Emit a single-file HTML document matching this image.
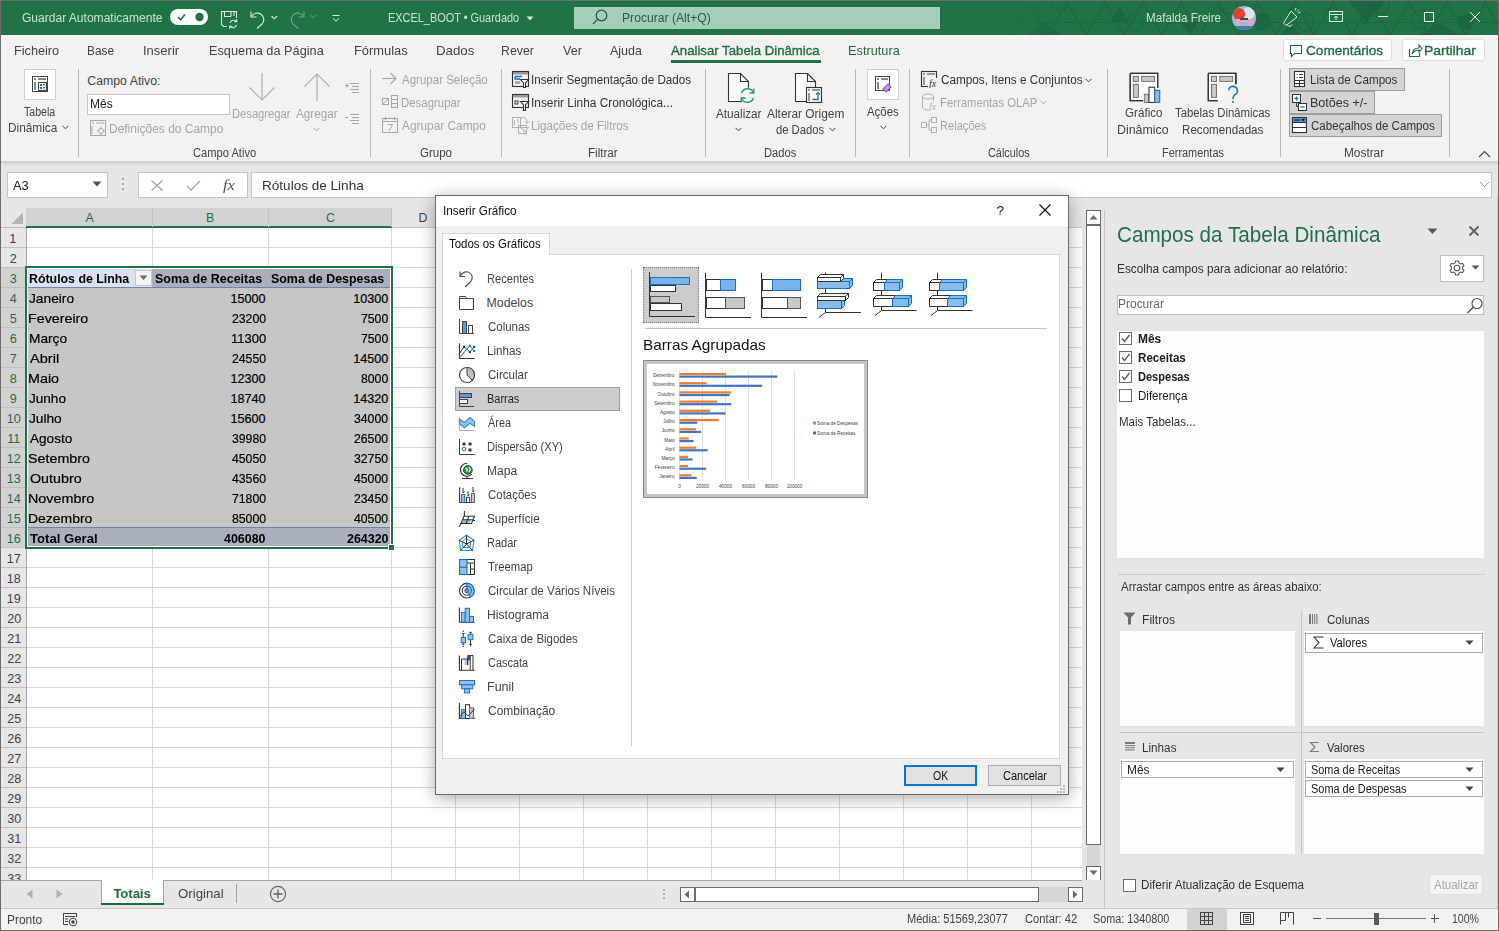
<!DOCTYPE html>
<html><head><meta charset="utf-8"><style>
html,body{margin:0;padding:0;}
body{width:1499px;height:931px;position:relative;overflow:hidden;background:#fff;font-family:'Liberation Sans',sans-serif;}
.a{position:absolute;}
.t{position:absolute;white-space:pre;line-height:1;transform-origin:0 0;}
</style></head><body>
<div class="a" style="left:0px;top:0px;width:1499px;height:931px;background:#e6e6e6;"></div>
<div class="a" style="left:0px;top:0px;width:1499px;height:35px;background:#217346;"></div>
<svg class="a" style="left:1000px;top:1px;" width="499" height="34" viewBox="0 0 499 34"><defs><linearGradient id="pg" x1="0" x2="1" y1="0" y2="0"><stop offset="0" stop-color="#fff" stop-opacity="0"/><stop offset="0.12" stop-color="#fff" stop-opacity="1"/></linearGradient><mask id="pm"><rect x="0" y="0" width="499" height="34" fill="url(#pg)"/></mask></defs><g mask="url(#pm)"><g fill="#1e6641"><path d="M110 21.5 L129 21.5 L119.5 5Z"/><path d="M281 34 L300 34 L290.5 21.5Z"/><path d="M348 0 L386 0 L367 21.5Z"/><path d="M180 21.5 L199 21.5 L190 34Z"/><path d="M420 34 L458 34 L439 21.5Z"/><path d="M44 21.5 L63 34 L25 34Z"/><circle cx="262" cy="21" r="9"/><circle cx="466" cy="21" r="8"/></g><g fill="none" stroke="#1b6740" stroke-width="1.1"><path d="M-66.0 34 L-46.4 0"/><path d="M-66.0 34 L-85.6 0"/><path d="M-28.0 34 L-8.4 0"/><path d="M-28.0 34 L-47.6 0"/><path d="M10.0 34 L29.6 0"/><path d="M10.0 34 L-9.6 0"/><path d="M48.0 34 L67.6 0"/><path d="M48.0 34 L28.4 0"/><path d="M86.0 34 L105.6 0"/><path d="M86.0 34 L66.4 0"/><path d="M124.0 34 L143.6 0"/><path d="M124.0 34 L104.4 0"/><path d="M162.0 34 L181.6 0"/><path d="M162.0 34 L142.4 0"/><path d="M200.0 34 L219.6 0"/><path d="M200.0 34 L180.4 0"/><path d="M238.0 34 L257.6 0"/><path d="M238.0 34 L218.4 0"/><path d="M276.0 34 L295.6 0"/><path d="M276.0 34 L256.4 0"/><path d="M314.0 34 L333.6 0"/><path d="M314.0 34 L294.4 0"/><path d="M352.0 34 L371.6 0"/><path d="M352.0 34 L332.4 0"/><path d="M390.0 34 L409.6 0"/><path d="M390.0 34 L370.4 0"/><path d="M428.0 34 L447.6 0"/><path d="M428.0 34 L408.4 0"/><path d="M466.0 34 L485.6 0"/><path d="M466.0 34 L446.4 0"/><path d="M504.0 34 L523.6 0"/><path d="M504.0 34 L484.4 0"/><path d="M542.0 34 L561.6 0"/><path d="M542.0 34 L522.4 0"/><path d="M580.0 34 L599.6 0"/><path d="M580.0 34 L560.4 0"/><path d="M0 21.5 H499"/><circle cx="60" cy="0" r="9"/><circle cx="135" cy="21" r="8"/><circle cx="228" cy="4" r="9"/><circle cx="305" cy="21" r="9"/><circle cx="380" cy="4" r="9"/><circle cx="420" cy="18" r="9"/></g></g></svg>
<div class="t" style="left:22.40px;top:12px;color:rgba(255,255,255,0.78);font-family:'Liberation Sans';font-size:12.5px;transform:scaleX(0.9630);">Guardar Automaticamente</div>
<div class="a" style="left:170px;top:9px;width:38px;height:16px;background:#ffffff;border-radius:8px;"></div>
<svg class="a" style="left:170px;top:9px;" width="38" height="16" viewBox="0 0 38 16"><path d="M8 8.2 L10.6 10.8 L15 5.6" fill="none" stroke="#217346" stroke-width="1.6"/><circle cx="29.5" cy="8" r="4.2" fill="#217346"/></svg>
<svg class="a" style="left:219px;top:9px;" width="20" height="20" viewBox="0 0 20 20"><g fill="none" stroke="#d9ebe0" stroke-width="1.1"><path d="M8 17.5 H4.5 L2.5 15.5 V2.5 H17.5 V9"/><path d="M5.5 2.5 V7.5 H12"/><path d="M12 2.5 V7.5 M15 2.5 V7"/>
<path d="M11 14 A3.8 3.8 0 0 1 17.5 12.5 M17.8 10 V12.8 H15"/><path d="M17.5 16 A3.8 3.8 0 0 1 11 17.5 M10.7 20 V17.2 H13.5"/></g></svg>
<svg class="a" style="left:248px;top:9px;" width="20" height="20" viewBox="0 0 20 20"><g fill="none" stroke="#d9ebe0" stroke-width="1.1"><path d="M3 2.5 V8 H8.5"/><path d="M3.5 7.5 A6.5 6.5 0 1 1 14 15 L9 19.5"/></g></svg>
<svg class="a" style="left:271px;top:15px;" width="7" height="6" viewBox="0 0 7 6"><path d="M0.5 1 L3.2 3.8 L6 1" fill="none" stroke="#d9ebe0" stroke-width="1.1"/></svg>
<svg class="a" style="left:288px;top:9px;" width="20" height="20" viewBox="0 0 20 20"><g fill="none" stroke="#6fa586" stroke-width="1.1"><path d="M16 2.5 V8 H10.5"/><path d="M15.5 7.5 A6.5 6.5 0 1 0 5 15 L10 19.5"/></g></svg>
<svg class="a" style="left:310px;top:14px;" width="7" height="6" viewBox="0 0 7 6"><path d="M0.5 1 L3.2 3.8 L6 1" fill="none" stroke="#6fa586" stroke-width="1"/></svg>
<svg class="a" style="left:331px;top:13px;" width="10" height="10" viewBox="0 0 10 10"><g fill="none" stroke="#d9ebe0" stroke-width="1"><path d="M1.5 2.5 H8.5"/><path d="M2 5.5 L5 8.2 L8 5.5"/></g></svg>
<div class="t" style="left:388.43px;top:12px;color:rgba(255,255,255,0.78);font-family:'Liberation Sans';font-size:12.5px;transform:scaleX(0.8738);">EXCEL_BOOT • Guardado</div>
<svg class="a" style="left:526px;top:16px;" width="8" height="5" viewBox="0 0 8 5"><path d="M0.5 0.5 H7.5 L4 4.5Z" fill="#d9ebe0"/></svg>
<div class="a" style="left:574px;top:7px;width:366px;height:22px;background:#a3cfb7;"></div>
<svg class="a" style="left:590px;top:8px;" width="20" height="20" viewBox="0 0 20 20"><g fill="none" stroke="#1f5c3b" stroke-width="1.2"><circle cx="11.5" cy="7.5" r="5.3"/><path d="M7.8 11.2 L3 16"/></g></svg>
<div class="t" style="left:622.33px;top:12px;color:#26603f;font-family:'Liberation Sans';font-size:12.5px;transform:scaleX(0.9711);">Procurar (Alt+Q)</div>
<div class="t" style="left:1145.57px;top:12px;color:rgba(255,255,255,0.78);font-family:'Liberation Sans';font-size:12.5px;transform:scaleX(0.9313);">Mafalda Freire</div>
<svg class="a" style="left:1232px;top:6px;" width="24" height="24" viewBox="0 0 24 24"><defs><clipPath id="av"><circle cx="12" cy="12" r="12"/></clipPath></defs><g clip-path="url(#av)">
<rect x="0" y="0" width="24" height="24" fill="#9fb9d6"/><circle cx="17" cy="7" r="6" fill="#dce9f2"/><circle cx="7" cy="8" r="6" fill="#e2402c"/><rect x="4" y="13" width="17" height="4" fill="#e9a9bd"/>
<rect x="5" y="16" width="2" height="6" fill="#e9a9bd"/><rect x="17" y="16" width="2" height="6" fill="#e9a9bd"/><rect x="8" y="12" width="8" height="2" fill="#3b4a6a"/><rect x="0" y="20" width="24" height="4" fill="#4d78b8"/></g></svg>
<svg class="a" style="left:1280px;top:6px;" width="22" height="22" viewBox="0 0 22 22"><g fill="none" stroke="#d9ebe0" stroke-width="1"><path d="M3.5 17 L6 19.5 L17 11 L11 5 Z"/><path d="M7 18 Q8 21.5 11 20 L12 18.5"/><path d="M15 4.5 L16 2 M18 7 L20.5 6 M17 5.5 L19 3.5"/></g></svg>
<svg class="a" style="left:1328px;top:10px;" width="17" height="14" viewBox="0 0 17 14"><g fill="none" stroke="#d9ebe0" stroke-width="1"><rect x="1.5" y="1.5" width="13" height="10"/><path d="M1.5 4.5 H14.5"/><path d="M8 10 V6 M6 8 L8 6 L10 8"/></g></svg>
<div class="a" style="left:1378px;top:16px;width:10px;height:1px;background:#e6f1ea;"></div>
<div class="a" style="left:1424px;top:12px;width:10px;height:10px;box-sizing:border-box;border:1px solid #e6f1ea;"></div>
<svg class="a" style="left:1469px;top:11px;" width="12" height="12" viewBox="0 0 12 12"><path d="M1 1 L11 11 M11 1 L1 11" stroke="#e6f1ea" stroke-width="1"/></svg>
<div class="a" style="left:0px;top:35px;width:1499px;height:126px;background:#f3f2f1;"></div>
<div class="t" style="left:14.26px;top:44px;color:#444444;font-family:'Liberation Sans';font-size:13.5px;transform:scaleX(0.9404);">Ficheiro</div>
<div class="t" style="left:87.32px;top:44px;color:#444444;font-family:'Liberation Sans';font-size:13.5px;transform:scaleX(0.8800);">Base</div>
<div class="t" style="left:143.04px;top:44px;color:#444444;font-family:'Liberation Sans';font-size:13.5px;transform:scaleX(0.9622);">Inserir</div>
<div class="t" style="left:209.46px;top:44px;color:#444444;font-family:'Liberation Sans';font-size:13.5px;transform:scaleX(0.9438);">Esquema da Página</div>
<div class="t" style="left:354.25px;top:44px;color:#444444;font-family:'Liberation Sans';font-size:13.5px;transform:scaleX(0.9527);">Fórmulas</div>
<div class="t" style="left:436.02px;top:44px;color:#444444;font-family:'Liberation Sans';font-size:13.5px;transform:scaleX(0.9842);">Dados</div>
<div class="t" style="left:501.49px;top:44px;color:#444444;font-family:'Liberation Sans';font-size:13.5px;transform:scaleX(0.9143);">Rever</div>
<div class="t" style="left:563.00px;top:44px;color:#444444;font-family:'Liberation Sans';font-size:13.5px;transform:scaleX(0.9300);">Ver</div>
<div class="t" style="left:610.00px;top:44px;color:#444444;font-family:'Liberation Sans';font-size:13.5px;transform:scaleX(0.9257);">Ajuda</div>
<div class="t" style="left:671.00px;top:44px;color:#1e6e42;font-family:'Liberation Sans';font-size:13.5px;transform:scaleX(0.9776);-webkit-text-stroke:0.35px currentColor;">Analisar Tabela Dinâmica</div>
<div class="t" style="left:848.46px;top:44px;color:#1e6e42;font-family:'Liberation Sans';font-size:13.5px;transform:scaleX(0.9444);">Estrutura</div>
<div class="a" style="left:671px;top:60px;width:150px;height:3px;background:#1e7145;"></div>
<div class="a" style="left:1283px;top:39px;width:109px;height:22px;background:#ffffff;box-sizing:border-box;border:1px solid #e1dfdd;border-radius:3px;"></div>
<svg class="a" style="left:1289px;top:44px;" width="14" height="14" viewBox="0 0 14 14"><path d="M1.5 1.5 H12.5 V9.5 H5.5 L2.5 12.5 V9.5 H1.5 Z" fill="none" stroke="#1e6e42" stroke-width="1.1"/></svg>
<div class="t" style="left:1306.00px;top:44px;color:#1e6e42;font-family:'Liberation Sans';font-size:13.5px;transform:scaleX(1.0079);-webkit-text-stroke:0.35px currentColor;">Comentários</div>
<div class="a" style="left:1402px;top:39px;width:83px;height:22px;background:#ffffff;box-sizing:border-box;border:1px solid #e1dfdd;border-radius:3px;"></div>
<svg class="a" style="left:1408px;top:43px;" width="15" height="15" viewBox="0 0 15 15"><g fill="none" stroke="#1e6e42" stroke-width="1.1"><path d="M1.5 6 V13.5 H11.5 V10"/><path d="M4 11 Q5 5 11 5 V2 L14 5.5 L11 9 V7 Q7 7 4 11Z"/></g></svg>
<div class="t" style="left:1424.47px;top:44px;color:#1e6e42;font-family:'Liberation Sans';font-size:13.5px;transform:scaleX(1.0306);-webkit-text-stroke:0.35px currentColor;">Partilhar</div>
<div class="a" style="left:78px;top:69px;width:1px;height:88px;background:#bab8b6;"></div>
<div class="a" style="left:370px;top:69px;width:1px;height:88px;background:#bab8b6;"></div>
<div class="a" style="left:501px;top:69px;width:1px;height:88px;background:#bab8b6;"></div>
<div class="a" style="left:705px;top:69px;width:1px;height:88px;background:#bab8b6;"></div>
<div class="a" style="left:855px;top:69px;width:1px;height:88px;background:#bab8b6;"></div>
<div class="a" style="left:909px;top:69px;width:1px;height:88px;background:#bab8b6;"></div>
<div class="a" style="left:1107px;top:69px;width:1px;height:88px;background:#bab8b6;"></div>
<div class="a" style="left:1280px;top:69px;width:1px;height:88px;background:#bab8b6;"></div>
<div class="a" style="left:1449px;top:69px;width:1px;height:88px;background:#bab8b6;"></div>
<div class="t" style="left:192.60px;top:147px;color:#444444;font-family:'Liberation Sans';font-size:12.3px;transform:scaleX(0.9057);">Campo Ativo</div>
<div class="t" style="left:419.60px;top:147px;color:#444444;font-family:'Liberation Sans';font-size:12.3px;transform:scaleX(0.9353);">Grupo</div>
<div class="t" style="left:587.55px;top:147px;color:#444444;font-family:'Liberation Sans';font-size:12.3px;transform:scaleX(0.9452);">Filtrar</div>
<div class="t" style="left:763.69px;top:147px;color:#444444;font-family:'Liberation Sans';font-size:12.3px;transform:scaleX(0.9086);">Dados</div>
<div class="t" style="left:987.80px;top:147px;color:#444444;font-family:'Liberation Sans';font-size:12.3px;transform:scaleX(0.8851);">Cálculos</div>
<div class="t" style="left:1161.81px;top:147px;color:#444444;font-family:'Liberation Sans';font-size:12.3px;transform:scaleX(0.8884);">Ferramentas</div>
<div class="t" style="left:1344.44px;top:147px;color:#444444;font-family:'Liberation Sans';font-size:12.3px;transform:scaleX(0.9634);">Mostrar</div>
<div class="a" style="left:0px;top:161px;width:1499px;height:5px;background:linear-gradient(#cbcbcb,#e6e6e6);"></div>
<div class="a" style="left:24px;top:69px;width:32px;height:31px;background:#ffffff;box-sizing:border-box;border:1px solid #d2d0ce;"></div>
<svg class="a" style="left:31px;top:75px;" width="18" height="18" viewBox="0 0 18 18"><g fill="none" stroke="#444" stroke-width="1"><rect x="1.5" y="1.5" width="15" height="15"/></g>
<rect x="3" y="3" width="2" height="2" fill="#888"/><rect x="7" y="3" width="8" height="2" fill="#888"/><rect x="3" y="7" width="2" height="8" fill="#888"/>
<rect x="7.5" y="7.5" width="8" height="8" fill="#fff" stroke="#444"/><rect x="9" y="9" width="2" height="2" fill="#1a73c8"/><rect x="9" y="12" width="2" height="2" fill="#1a73c8"/><rect x="12" y="9" width="2" height="1.4" fill="#1a73c8"/><rect x="12" y="12" width="2" height="1.4" fill="#1a73c8"/></svg>
<div class="t" style="left:23.70px;top:106px;color:#444444;font-family:'Liberation Sans';font-size:12.3px;transform:scaleX(0.8622);">Tabela</div>
<div class="t" style="left:8.34px;top:122px;color:#444444;font-family:'Liberation Sans';font-size:12.3px;transform:scaleX(0.9627);">Dinâmica</div>
<svg class="a" style="left:62px;top:125px;" width="7" height="5" viewBox="0 0 7 5"><path d="M0.5 0.8 L3.5 3.8 L6.5 0.8" fill="none" stroke="#444" stroke-width="1"/></svg>
<div class="t" style="left:87.30px;top:75px;color:#444444;font-family:'Liberation Sans';font-size:12.3px;">Campo Ativo:</div>
<div class="a" style="left:87px;top:94px;width:143px;height:21px;background:#ffffff;box-sizing:border-box;border:1px solid #c8c6c4;"></div>
<div class="t" style="left:89.52px;top:98px;color:#222222;font-family:'Liberation Sans';font-size:12.3px;transform:scaleX(0.9773);">Mês</div>
<svg class="a" style="left:89px;top:119px;" width="18" height="18" viewBox="0 0 18 18"><g fill="none" stroke="#a6a6a6" stroke-width="1"><rect x="1.5" y="1.5" width="15" height="15"/><path d="M3 4 H5 M7 4 H15 M3 7 V15"/><circle cx="12" cy="12" r="2.5"/><path d="M12 8 V9 M12 15 V16 M8 12 H9 M15 12 H16"/></g></svg>
<div class="t" style="left:108.73px;top:123px;color:#a6a6a6;font-family:'Liberation Sans';font-size:12.3px;transform:scaleX(0.9724);">Definições do Campo</div>
<svg class="a" style="left:248px;top:72px;" width="28" height="30" viewBox="0 0 28 30"><g fill="none" stroke="#b3b0ad" stroke-width="1.2"><path d="M14 1 V28"/><path d="M1.5 15.5 L14 28 L26.5 15.5"/></g></svg>
<div class="t" style="left:231.69px;top:108px;color:#a6a6a6;font-family:'Liberation Sans';font-size:12.3px;transform:scaleX(0.9094);">Desagregar</div>
<svg class="a" style="left:303px;top:72px;" width="28" height="30" viewBox="0 0 28 30"><g fill="none" stroke="#b3b0ad" stroke-width="1.2"><path d="M14 2 V29"/><path d="M1.5 14.5 L14 2 L26.5 14.5"/></g></svg>
<div class="t" style="left:296.20px;top:108px;color:#a6a6a6;font-family:'Liberation Sans';font-size:12.3px;transform:scaleX(0.9500);">Agregar</div>
<svg class="a" style="left:313px;top:127px;" width="7" height="5" viewBox="0 0 7 5"><path d="M0.5 0.8 L3.5 3.8 L6.5 0.8" fill="none" stroke="#a6a6a6" stroke-width="1"/></svg>
<svg class="a" style="left:344px;top:82px;" width="16" height="12" viewBox="0 0 16 12"><g stroke="#a6a6a6" stroke-width="1" fill="none"><path d="M1 3.5 H5 M3 1.5 V5.5"/><path d="M6 1.5 H15 M8 4.5 H15 M6 7.5 H15 M8 10.5 H15"/></g></svg>
<svg class="a" style="left:344px;top:113px;" width="16" height="12" viewBox="0 0 16 12"><g stroke="#a6a6a6" stroke-width="1" fill="none"><path d="M1 4.5 H4"/><path d="M6 1.5 H15 M8 4.5 H15 M6 7.5 H15 M8 10.5 H15"/></g></svg>
<svg class="a" style="left:381px;top:72px;" width="17" height="13" viewBox="0 0 17 13"><g fill="none" stroke="#a6a6a6" stroke-width="1.1"><path d="M1 6.5 H15"/><path d="M9.5 1 L15 6.5 L9.5 12"/></g></svg>
<div class="t" style="left:401.50px;top:74px;color:#a6a6a6;font-family:'Liberation Sans';font-size:12.3px;transform:scaleX(0.9363);">Agrupar Seleção</div>
<svg class="a" style="left:381px;top:94px;" width="18" height="15" viewBox="0 0 18 15"><g fill="none" stroke="#a6a6a6" stroke-width="1"><rect x="1.5" y="4.5" width="6" height="6"/><path d="M1.5 10.5 L7.5 4.5"/><rect x="10.5" y="1.5" width="6" height="12"/><path d="M10.5 5.5 H16.5 M10.5 9.5 H16.5"/></g></svg>
<div class="t" style="left:400.57px;top:97px;color:#a6a6a6;font-family:'Liberation Sans';font-size:12.3px;transform:scaleX(0.9281);">Desagrupar</div>
<svg class="a" style="left:381px;top:116px;" width="18" height="18" viewBox="0 0 18 18"><g fill="none" stroke="#a6a6a6" stroke-width="1"><rect x="1.5" y="2.5" width="15" height="14"/><path d="M1.5 5.5 H16.5 M4.5 1 V4 M13.5 1 V4"/><path d="M6.5 8.5 H11.5 L8 15"/></g></svg>
<div class="t" style="left:401.50px;top:120px;color:#a6a6a6;font-family:'Liberation Sans';font-size:12.3px;transform:scaleX(0.9655);">Agrupar Campo</div>
<svg class="a" style="left:511px;top:70px;" width="19" height="19" viewBox="0 0 19 19"><g fill="none" stroke="#333" stroke-width="1.1"><rect x="1.5" y="1.5" width="16" height="15"/></g><rect x="2" y="2" width="15" height="2.5" fill="#999"/>
<path d="M4 6.5 H11 M4 6.5 V9 H9" stroke="#1a73c8" stroke-width="1.3" fill="none"/><rect x="4" y="11" width="5" height="3" fill="#aaa"/>
<path d="M9.5 9.5 H17.5 L14.5 13 V17.5 H12.5 V13 Z" fill="#fff" stroke="#333" stroke-width="1.1"/></svg>
<div class="t" style="left:531.36px;top:74px;color:#333333;font-family:'Liberation Sans';font-size:12.3px;transform:scaleX(0.9435);">Inserir Segmentação de Dados</div>
<svg class="a" style="left:511px;top:93px;" width="19" height="19" viewBox="0 0 19 19"><g fill="none" stroke="#333" stroke-width="1.1"><rect x="1.5" y="1.5" width="16" height="13"/></g><rect x="2" y="2" width="15" height="2.5" fill="#999"/>
<rect x="4" y="8" width="3" height="3" fill="none" stroke="#333"/><path d="M9.5 8.5 H17.5 L14.5 12 V17.5 H12.5 V12 Z" fill="#fff" stroke="#333" stroke-width="1.1"/></svg>
<div class="t" style="left:531.33px;top:97px;color:#333333;font-family:'Liberation Sans';font-size:12.3px;transform:scaleX(0.9662);">Inserir Linha Cronológica...</div>
<svg class="a" style="left:511px;top:116px;" width="19" height="19" viewBox="0 0 19 19"><g fill="none" stroke="#b0b0b0" stroke-width="1"><rect x="1.5" y="1.5" width="8" height="10"/><path d="M3.5 4 V9 M6 4 H8 M6 6 H8"/><path d="M10 2 A4 4 0 0 1 16 6 L16 7 M14 5.5 L16 7.5 L18 5.5"/><rect x="7.5" y="9.5" width="8" height="8"/><path d="M9 11.5 H17.5 L15 14 V18 H13 V14 Z" fill="#f3f2f1"/></g></svg>
<div class="t" style="left:531.35px;top:120px;color:#a6a6a6;font-family:'Liberation Sans';font-size:12.3px;transform:scaleX(0.9451);">Ligações de Filtros</div>
<svg class="a" style="left:726px;top:72px;" width="32" height="32" viewBox="0 0 32 32"><path d="M2.5 1.5 H14.5 L22.5 9.5 V29.5 H2.5 Z" fill="#fafafa" stroke="#333" stroke-width="1.1"/><path d="M14.5 1.5 V9.5 H22.5" fill="none" stroke="#333" stroke-width="1.1"/>
<g fill="#f3f2f1"><circle cx="21.5" cy="23.5" r="8"/></g>
<g fill="none" stroke="#21a366" stroke-width="1.4"><path d="M15.5 21 A6.5 6.5 0 0 1 27.5 20.5"/><path d="M27.5 26 A6.5 6.5 0 0 1 15.5 26.5"/></g>
<path d="M27.8 16.5 V21 H23.5" fill="none" stroke="#21a366" stroke-width="1.4"/><path d="M15.2 30.5 V26 H19.5" fill="none" stroke="#21a366" stroke-width="1.4"/></svg>
<div class="t" style="left:716.00px;top:108px;color:#444444;font-family:'Liberation Sans';font-size:12.3px;transform:scaleX(0.9500);">Atualizar</div>
<svg class="a" style="left:735px;top:127px;" width="7" height="5" viewBox="0 0 7 5"><path d="M0.5 0.8 L3.5 3.8 L6.5 0.8" fill="none" stroke="#444" stroke-width="1"/></svg>
<svg class="a" style="left:793px;top:72px;" width="32" height="32" viewBox="0 0 32 32"><path d="M2.5 1.5 H14.5 L22.5 9.5 V29.5 H2.5 Z" fill="#fafafa" stroke="#333" stroke-width="1.1"/><path d="M14.5 1.5 V9.5 H22.5" fill="none" stroke="#333" stroke-width="1.1"/>
<rect x="13.5" y="15.5" width="15" height="15" fill="#fafafa" stroke="#333" stroke-width="1.1"/><rect x="15" y="17" width="2" height="2" fill="#999"/><rect x="19" y="17" width="8" height="2" fill="#999"/><rect x="15" y="21" width="2" height="8" fill="#999"/>
<path d="M19.5 27.5 H25 V21" fill="none" stroke="#1a73c8" stroke-width="1.3"/><path d="M23 22.5 L25 20.5 L27 22.5" fill="none" stroke="#1a73c8" stroke-width="1.2"/></svg>
<div class="t" style="left:767.20px;top:108px;color:#444444;font-family:'Liberation Sans';font-size:12.3px;transform:scaleX(0.9675);">Alterar Origem</div>
<div class="t" style="left:776.30px;top:124px;color:#444444;font-family:'Liberation Sans';font-size:12.3px;transform:scaleX(0.9132);">de Dados</div>
<svg class="a" style="left:829px;top:127px;" width="7" height="5" viewBox="0 0 7 5"><path d="M0.5 0.8 L3.5 3.8 L6.5 0.8" fill="none" stroke="#444" stroke-width="1"/></svg>
<div class="a" style="left:867px;top:69px;width:32px;height:31px;background:#ffffff;box-sizing:border-box;border:1px solid #d2d0ce;"></div>
<svg class="a" style="left:874px;top:75px;" width="18" height="18" viewBox="0 0 18 18"><rect x="1.5" y="1.5" width="14" height="14" fill="none" stroke="#444"/><rect x="3" y="3" width="2" height="2" fill="#888"/><rect x="7" y="3" width="7" height="2" fill="#888"/><rect x="3" y="7" width="2" height="7" fill="#888"/>
<path d="M9 14 L14 9 L17 12 L12 17 Z" fill="#c39fd8" stroke="#9b4fc9" stroke-width="1.1"/></svg>
<div class="t" style="left:867.30px;top:106px;color:#444444;font-family:'Liberation Sans';font-size:12.3px;transform:scaleX(0.9294);">Ações</div>
<svg class="a" style="left:880px;top:125px;" width="7" height="5" viewBox="0 0 7 5"><path d="M0.5 0.8 L3.5 3.8 L6.5 0.8" fill="none" stroke="#444" stroke-width="1"/></svg>
<svg class="a" style="left:920px;top:70px;" width="18" height="18" viewBox="0 0 18 18"><rect x="1.5" y="1.5" width="15" height="15" fill="none" stroke="#333" stroke-width="1.1"/><rect x="3" y="3" width="2" height="2" fill="#999"/><rect x="7" y="3" width="8" height="2" fill="#999"/><rect x="3" y="7" width="2" height="8" fill="#999"/>
<rect x="8" y="8" width="10" height="10" fill="#f3f2f1"/><text x="9" y="17" font-family="Liberation Serif" font-style="italic" font-size="10" fill="#333">fx</text></svg>
<div class="t" style="left:940.70px;top:74px;color:#333333;font-family:'Liberation Sans';font-size:12.3px;transform:scaleX(0.9547);">Campos, Itens e Conjuntos</div>
<svg class="a" style="left:1085px;top:78px;" width="7" height="5" viewBox="0 0 7 5"><path d="M0.5 0.8 L3.5 3.8 L6.5 0.8" fill="none" stroke="#444" stroke-width="1"/></svg>
<svg class="a" style="left:921px;top:93px;" width="18" height="18" viewBox="0 0 18 18"><g fill="none" stroke="#b0b0b0" stroke-width="1"><ellipse cx="7" cy="3.5" rx="5.5" ry="2.5"/><path d="M1.5 3.5 V14.5 A5.5 2.5 0 0 0 8 17"/><path d="M12.5 3.5 V8"/></g><text x="8" y="17" font-family="Liberation Serif" font-style="italic" font-size="10" fill="#b0b0b0">fx</text></svg>
<div class="t" style="left:939.78px;top:97px;color:#a6a6a6;font-family:'Liberation Sans';font-size:12.3px;transform:scaleX(0.9190);">Ferramentas OLAP</div>
<svg class="a" style="left:1040px;top:100px;" width="7" height="5" viewBox="0 0 7 5"><path d="M0.5 0.8 L3.5 3.8 L6.5 0.8" fill="none" stroke="#a6a6a6" stroke-width="1"/></svg>
<svg class="a" style="left:920px;top:116px;" width="18" height="18" viewBox="0 0 18 18"><g fill="none" stroke="#b0b0b0" stroke-width="1"><rect x="1.5" y="6.5" width="5" height="5"/><rect x="11.5" y="1.5" width="5" height="5"/><rect x="11.5" y="11.5" width="5" height="5"/><path d="M6.5 9 H9 V4 H11.5 M9 9 V14 H11.5"/></g></svg>
<div class="t" style="left:939.80px;top:120px;color:#a6a6a6;font-family:'Liberation Sans';font-size:12.3px;transform:scaleX(0.9040);">Relações</div>
<svg class="a" style="left:1120px;top:66px;" width="130" height="40" viewBox="0 0 130 40"><path d="M10.2 7.4 H37.7 V22 M10.2 7.4 V34.7 H23" fill="none" stroke="#333" stroke-width="1.2"/><rect x="10.8" y="8" width="26.3" height="26.1" fill="#fafafa"/><path d="M10.2 7.4 H37.7 V22 M10.2 7.4 V34.7 H23" fill="none" stroke="#333" stroke-width="1.2"/><rect x="13.4" y="10.4" width="4.999999999999998" height="5.0" fill="#c8c8c8" stroke="#6b6b6b" stroke-width="0.9"/><rect x="21.7" y="10.4" width="12.900000000000002" height="5.0" fill="#c8c8c8" stroke="#6b6b6b" stroke-width="0.9"/><rect x="13.4" y="18.4" width="4.999999999999998" height="13.0" fill="#c8c8c8" stroke="#6b6b6b" stroke-width="0.9"/><rect x="24.3" y="28.2" width="4.7" height="8.2" fill="#c8c8c8" stroke="#6b6b6b" stroke-width="0.9"/><rect x="29" y="21.2" width="5.7" height="15.2" fill="#fff" stroke="#222" stroke-width="1"/><rect x="34.7" y="24.3" width="5" height="12.1" fill="#86bdec" stroke="#1a6fc4" stroke-width="1.1"/><path d="M88.3 7.4 H115.8 V18.5 M88.3 7.4 V34.7 H97.6" fill="none" stroke="#333" stroke-width="1.2"/><rect x="88.89999999999999" y="8" width="26.3" height="26.1" fill="#fafafa"/><path d="M88.3 7.4 H115.8 V18.5 M88.3 7.4 V34.7 H97.6" fill="none" stroke="#333" stroke-width="1.2"/><rect x="91.5" y="10.4" width="4.999999999999998" height="5.0" fill="#c8c8c8" stroke="#6b6b6b" stroke-width="0.9"/><rect x="99.8" y="10.4" width="12.900000000000002" height="5.0" fill="#c8c8c8" stroke="#6b6b6b" stroke-width="0.9"/><rect x="91.5" y="18.4" width="4.999999999999998" height="13.0" fill="#c8c8c8" stroke="#6b6b6b" stroke-width="0.9"/><rect x="104" y="18" width="16" height="20" fill="#f3f2f1"/><path d="M108.8 24.5 A4.3 4.3 0 1 1 115 28.5 Q113 29.8 113 32.5 V33.3" fill="none" stroke="#1a80d0" stroke-width="1.6"/><circle cx="113" cy="36" r="1.1" fill="#1a80d0"/><path d="M115.8 7.4 V18.5" stroke="#333" stroke-width="1.2"/></svg>
<div class="t" style="left:1125.40px;top:107px;color:#444444;font-family:'Liberation Sans';font-size:12.3px;transform:scaleX(0.9487);">Gráfico</div>
<div class="t" style="left:1117.39px;top:124px;color:#444444;font-family:'Liberation Sans';font-size:12.3px;transform:scaleX(1.0060);">Dinâmico</div>
<div class="t" style="left:1174.70px;top:107px;color:#444444;font-family:'Liberation Sans';font-size:12.3px;transform:scaleX(0.9223);">Tabelas Dinâmicas</div>
<div class="t" style="left:1181.56px;top:124px;color:#444444;font-family:'Liberation Sans';font-size:12.3px;transform:scaleX(0.9447);">Recomendadas</div>
<div class="a" style="left:1289px;top:68px;width:116px;height:23px;background:#d4d4d4;box-sizing:border-box;border:1px solid #9e9e9e;"></div>
<div class="a" style="left:1289px;top:91px;width:86px;height:23px;background:#d4d4d4;box-sizing:border-box;border:1px solid #9e9e9e;"></div>
<div class="a" style="left:1289px;top:114px;width:153px;height:23px;background:#d4d4d4;box-sizing:border-box;border:1px solid #9e9e9e;"></div>
<svg class="a" style="left:1292px;top:70px;" width="15" height="18" viewBox="0 0 15 18"><rect x="2.5" y="1.5" width="10" height="15" fill="#fff" stroke="#333" stroke-width="1.1"/><path d="M4.5 4.5 H5.5 M7 4.5 H11 M4.5 7.5 H5.5 M7 7.5 H11 M2.5 10.5 H12.5 M2.5 13.5 H12.5 M7.5 10.5 V16.5" stroke="#333" stroke-width="1"/></svg>
<div class="t" style="left:1310.45px;top:74px;color:#333333;font-family:'Liberation Sans';font-size:12.3px;transform:scaleX(0.9473);">Lista de Campos</div>
<svg class="a" style="left:1291px;top:93px;" width="18" height="19" viewBox="0 0 18 19"><rect x="1.5" y="1.5" width="8" height="8" fill="#fff" stroke="#333"/><path d="M3.5 5.5 H7.5 M5.5 3.5 V7.5" stroke="#1a73c8" stroke-width="1.3"/>
<rect x="7.5" y="10.5" width="8" height="7" fill="#fff" stroke="#333"/><path d="M9.5 14 H13.5" stroke="#1a73c8" stroke-width="1.3"/><path d="M5.5 9.5 V13.5 H7.5" stroke="#333" fill="none"/></svg>
<div class="t" style="left:1310.38px;top:97px;color:#333333;font-family:'Liberation Sans';font-size:12.3px;transform:scaleX(1.0182);">Botões +/-</div>
<svg class="a" style="left:1291px;top:116px;" width="17" height="18" viewBox="0 0 17 18"><rect x="1.5" y="1.5" width="14" height="15" fill="#fff" stroke="#333" stroke-width="1.1"/><rect x="2" y="2" width="13" height="4" fill="#4a90d9"/><path d="M3.5 4 H9" stroke="#111" stroke-width="1"/><path d="M10 3 H14 L12 5.5Z" fill="#111"/><path d="M1.5 6.5 H15.5 M1.5 11.5 H15.5" stroke="#333"/></svg>
<div class="t" style="left:1311.40px;top:120px;color:#333333;font-family:'Liberation Sans';font-size:12.3px;transform:scaleX(0.9427);">Cabeçalhos de Campos</div>
<svg class="a" style="left:1478px;top:150px;" width="13" height="8" viewBox="0 0 13 8"><path d="M1 7 L6.5 1.5 L12 7" fill="none" stroke="#444" stroke-width="1.1"/></svg>
<div class="a" style="left:7px;top:172px;width:101px;height:26px;background:#ffffff;box-sizing:border-box;border:1px solid #c6c6c6;"></div>
<div class="t" style="left:13.00px;top:179px;color:#222222;font-family:'Liberation Sans';font-size:13.3px;transform:scaleX(0.9625);">A3</div>
<svg class="a" style="left:92px;top:181px;" width="10" height="6" viewBox="0 0 10 6"><path d="M0.5 0.5 H9.5 L5 5.5Z" fill="#555"/></svg>
<div class="a" style="left:122px;top:178px;width:2px;height:2px;background:#a0a0a0;"></div>
<div class="a" style="left:122px;top:183px;width:2px;height:2px;background:#a0a0a0;"></div>
<div class="a" style="left:122px;top:188px;width:2px;height:2px;background:#a0a0a0;"></div>
<div class="a" style="left:138px;top:172px;width:110px;height:26px;background:#ffffff;box-sizing:border-box;border:1px solid #c6c6c6;"></div>
<svg class="a" style="left:150px;top:179px;" width="14" height="13" viewBox="0 0 14 13"><path d="M1.5 1.5 L12.5 11.5 M12.5 1.5 L1.5 11.5" stroke="#a6a6a6" stroke-width="1.3"/></svg>
<svg class="a" style="left:186px;top:179px;" width="15" height="13" viewBox="0 0 15 13"><path d="M1 7 L5 11 L14 2" fill="none" stroke="#b0b0b0" stroke-width="1.6"/></svg>
<div class="t" style="left:223.20px;top:179px;color:#555555;font-family:'Liberation Serif';font-size:14px;font-style:italic;transform:scaleX(1.1800);">fx</div>
<div class="a" style="left:251px;top:172px;width:1241px;height:26px;background:#ffffff;box-sizing:border-box;border:1px solid #c6c6c6;"></div>
<div class="t" style="left:262.28px;top:179px;color:#333333;font-family:'Liberation Sans';font-size:13.3px;transform:scaleX(1.0192);">Rótulos de Linha</div>
<svg class="a" style="left:1479px;top:181px;" width="11" height="7" viewBox="0 0 11 7"><path d="M1 1 L5.5 5.5 L10 1" fill="none" stroke="#a0a0a0" stroke-width="1"/></svg>
<div class="a" style="left:27px;top:228px;width:1055px;height:652px;background:#ffffff;"></div>
<div class="a" style="left:1px;top:208px;width:1081px;height:19px;background:#e6e6e6;"></div>
<div class="a" style="left:26px;top:208px;width:365px;height:18px;background:#d2d2d2;"></div>
<div class="a" style="left:26px;top:226px;width:366px;height:2px;background:#217346;"></div>
<div class="a" style="left:1px;top:227px;width:25px;height:1px;background:#b8b8b8;"></div>
<div class="a" style="left:392px;top:227px;width:690px;height:1px;background:#c6c6c6;"></div>
<div class="a" style="left:152px;top:208px;width:1px;height:19px;background:#c0c0c0;"></div>
<div class="a" style="left:268px;top:208px;width:1px;height:19px;background:#c0c0c0;"></div>
<div class="a" style="left:391px;top:208px;width:1px;height:19px;background:#c0c0c0;"></div>
<div class="a" style="left:455px;top:208px;width:1px;height:19px;background:#c0c0c0;"></div>
<div class="a" style="left:519px;top:208px;width:1px;height:19px;background:#c0c0c0;"></div>
<div class="a" style="left:583px;top:208px;width:1px;height:19px;background:#c0c0c0;"></div>
<div class="a" style="left:647px;top:208px;width:1px;height:19px;background:#c0c0c0;"></div>
<div class="a" style="left:711px;top:208px;width:1px;height:19px;background:#c0c0c0;"></div>
<div class="a" style="left:775px;top:208px;width:1px;height:19px;background:#c0c0c0;"></div>
<div class="a" style="left:839px;top:208px;width:1px;height:19px;background:#c0c0c0;"></div>
<div class="a" style="left:903px;top:208px;width:1px;height:19px;background:#c0c0c0;"></div>
<div class="a" style="left:967px;top:208px;width:1px;height:19px;background:#c0c0c0;"></div>
<div class="a" style="left:1031px;top:208px;width:1px;height:19px;background:#c0c0c0;"></div>
<svg class="a" style="left:11px;top:212px;" width="13" height="13" viewBox="0 0 13 13"><path d="M12 0.5 V12 H0.5 Z" fill="#b4b4b4"/></svg>
<div class="t" style="left:85.50px;top:212px;color:#1e6e42;font-family:'Liberation Sans';font-size:12.3px;">A</div>
<div class="t" style="left:206.00px;top:212px;color:#1e6e42;font-family:'Liberation Sans';font-size:12.3px;">B</div>
<div class="t" style="left:326.00px;top:212px;color:#1e6e42;font-family:'Liberation Sans';font-size:12.3px;">C</div>
<div class="t" style="left:418.50px;top:212px;color:#444444;font-family:'Liberation Sans';font-size:12.3px;">D</div>
<div class="t" style="left:483.00px;top:212px;color:#444444;font-family:'Liberation Sans';font-size:12.3px;">E</div>
<div class="t" style="left:547.50px;top:212px;color:#444444;font-family:'Liberation Sans';font-size:12.3px;">F</div>
<div class="t" style="left:611.00px;top:212px;color:#444444;font-family:'Liberation Sans';font-size:12.3px;">G</div>
<div class="t" style="left:675.00px;top:212px;color:#444444;font-family:'Liberation Sans';font-size:12.3px;">H</div>
<div class="t" style="left:741.50px;top:212px;color:#444444;font-family:'Liberation Sans';font-size:12.3px;">I</div>
<div class="t" style="left:804.50px;top:212px;color:#444444;font-family:'Liberation Sans';font-size:12.3px;">J</div>
<div class="t" style="left:867.00px;top:212px;color:#444444;font-family:'Liberation Sans';font-size:12.3px;">K</div>
<div class="t" style="left:931.50px;top:212px;color:#444444;font-family:'Liberation Sans';font-size:12.3px;">L</div>
<div class="t" style="left:994.00px;top:212px;color:#444444;font-family:'Liberation Sans';font-size:12.3px;">M</div>
<div class="t" style="left:1052.50px;top:212px;color:#444444;font-family:'Liberation Sans';font-size:12.3px;">N</div>
<div class="a" style="left:27px;top:247px;width:1055px;height:1px;background:#d9d9d9;"></div>
<div class="a" style="left:27px;top:267px;width:1055px;height:1px;background:#d9d9d9;"></div>
<div class="a" style="left:27px;top:287px;width:1055px;height:1px;background:#d9d9d9;"></div>
<div class="a" style="left:27px;top:307px;width:1055px;height:1px;background:#d9d9d9;"></div>
<div class="a" style="left:27px;top:327px;width:1055px;height:1px;background:#d9d9d9;"></div>
<div class="a" style="left:27px;top:347px;width:1055px;height:1px;background:#d9d9d9;"></div>
<div class="a" style="left:27px;top:367px;width:1055px;height:1px;background:#d9d9d9;"></div>
<div class="a" style="left:27px;top:387px;width:1055px;height:1px;background:#d9d9d9;"></div>
<div class="a" style="left:27px;top:407px;width:1055px;height:1px;background:#d9d9d9;"></div>
<div class="a" style="left:27px;top:427px;width:1055px;height:1px;background:#d9d9d9;"></div>
<div class="a" style="left:27px;top:447px;width:1055px;height:1px;background:#d9d9d9;"></div>
<div class="a" style="left:27px;top:467px;width:1055px;height:1px;background:#d9d9d9;"></div>
<div class="a" style="left:27px;top:487px;width:1055px;height:1px;background:#d9d9d9;"></div>
<div class="a" style="left:27px;top:507px;width:1055px;height:1px;background:#d9d9d9;"></div>
<div class="a" style="left:27px;top:527px;width:1055px;height:1px;background:#d9d9d9;"></div>
<div class="a" style="left:27px;top:547px;width:1055px;height:1px;background:#d9d9d9;"></div>
<div class="a" style="left:27px;top:567px;width:1055px;height:1px;background:#d9d9d9;"></div>
<div class="a" style="left:27px;top:587px;width:1055px;height:1px;background:#d9d9d9;"></div>
<div class="a" style="left:27px;top:607px;width:1055px;height:1px;background:#d9d9d9;"></div>
<div class="a" style="left:27px;top:627px;width:1055px;height:1px;background:#d9d9d9;"></div>
<div class="a" style="left:27px;top:647px;width:1055px;height:1px;background:#d9d9d9;"></div>
<div class="a" style="left:27px;top:667px;width:1055px;height:1px;background:#d9d9d9;"></div>
<div class="a" style="left:27px;top:687px;width:1055px;height:1px;background:#d9d9d9;"></div>
<div class="a" style="left:27px;top:707px;width:1055px;height:1px;background:#d9d9d9;"></div>
<div class="a" style="left:27px;top:727px;width:1055px;height:1px;background:#d9d9d9;"></div>
<div class="a" style="left:27px;top:747px;width:1055px;height:1px;background:#d9d9d9;"></div>
<div class="a" style="left:27px;top:767px;width:1055px;height:1px;background:#d9d9d9;"></div>
<div class="a" style="left:27px;top:787px;width:1055px;height:1px;background:#d9d9d9;"></div>
<div class="a" style="left:27px;top:807px;width:1055px;height:1px;background:#d9d9d9;"></div>
<div class="a" style="left:27px;top:827px;width:1055px;height:1px;background:#d9d9d9;"></div>
<div class="a" style="left:27px;top:847px;width:1055px;height:1px;background:#d9d9d9;"></div>
<div class="a" style="left:27px;top:867px;width:1055px;height:1px;background:#d9d9d9;"></div>
<div class="a" style="left:152px;top:228px;width:1px;height:652px;background:#d9d9d9;"></div>
<div class="a" style="left:268px;top:228px;width:1px;height:652px;background:#d9d9d9;"></div>
<div class="a" style="left:391px;top:228px;width:1px;height:652px;background:#d9d9d9;"></div>
<div class="a" style="left:455px;top:228px;width:1px;height:652px;background:#d9d9d9;"></div>
<div class="a" style="left:519px;top:228px;width:1px;height:652px;background:#d9d9d9;"></div>
<div class="a" style="left:583px;top:228px;width:1px;height:652px;background:#d9d9d9;"></div>
<div class="a" style="left:647px;top:228px;width:1px;height:652px;background:#d9d9d9;"></div>
<div class="a" style="left:711px;top:228px;width:1px;height:652px;background:#d9d9d9;"></div>
<div class="a" style="left:775px;top:228px;width:1px;height:652px;background:#d9d9d9;"></div>
<div class="a" style="left:839px;top:228px;width:1px;height:652px;background:#d9d9d9;"></div>
<div class="a" style="left:903px;top:228px;width:1px;height:652px;background:#d9d9d9;"></div>
<div class="a" style="left:967px;top:228px;width:1px;height:652px;background:#d9d9d9;"></div>
<div class="a" style="left:1031px;top:228px;width:1px;height:652px;background:#d9d9d9;"></div>
<div class="a" style="left:1082px;top:208px;width:1px;height:672px;background:#c6c6c6;"></div>
<div class="a" style="left:1px;top:228px;width:25px;height:652px;background:#e6e6e6;"></div>
<div class="a" style="left:1px;top:268px;width:25px;height:279px;background:#d2d2d2;"></div>
<div class="a" style="left:26px;top:228px;width:1px;height:652px;background:#a8a8a8;"></div>
<div class="a" style="left:1px;top:247px;width:25px;height:1px;background:#c0c0c0;"></div>
<div class="t" style="left:9.30px;top:233px;color:#444444;font-family:'Liberation Sans';font-size:12.6px;">1</div>
<div class="a" style="left:1px;top:267px;width:25px;height:1px;background:#c0c0c0;"></div>
<div class="t" style="left:9.80px;top:253px;color:#444444;font-family:'Liberation Sans';font-size:12.6px;">2</div>
<div class="a" style="left:1px;top:287px;width:25px;height:1px;background:#c0c0c0;"></div>
<div class="t" style="left:9.80px;top:273px;color:#1e6e42;font-family:'Liberation Sans';font-size:12.6px;">3</div>
<div class="a" style="left:1px;top:307px;width:25px;height:1px;background:#c0c0c0;"></div>
<div class="t" style="left:9.80px;top:293px;color:#1e6e42;font-family:'Liberation Sans';font-size:12.6px;">4</div>
<div class="a" style="left:1px;top:327px;width:25px;height:1px;background:#c0c0c0;"></div>
<div class="t" style="left:9.80px;top:313px;color:#1e6e42;font-family:'Liberation Sans';font-size:12.6px;">5</div>
<div class="a" style="left:1px;top:347px;width:25px;height:1px;background:#c0c0c0;"></div>
<div class="t" style="left:9.80px;top:333px;color:#1e6e42;font-family:'Liberation Sans';font-size:12.6px;">6</div>
<div class="a" style="left:1px;top:367px;width:25px;height:1px;background:#c0c0c0;"></div>
<div class="t" style="left:9.80px;top:353px;color:#1e6e42;font-family:'Liberation Sans';font-size:12.6px;">7</div>
<div class="a" style="left:1px;top:387px;width:25px;height:1px;background:#c0c0c0;"></div>
<div class="t" style="left:9.80px;top:373px;color:#1e6e42;font-family:'Liberation Sans';font-size:12.6px;">8</div>
<div class="a" style="left:1px;top:407px;width:25px;height:1px;background:#c0c0c0;"></div>
<div class="t" style="left:9.80px;top:393px;color:#1e6e42;font-family:'Liberation Sans';font-size:12.6px;">9</div>
<div class="a" style="left:1px;top:427px;width:25px;height:1px;background:#c0c0c0;"></div>
<div class="t" style="left:6.80px;top:413px;color:#1e6e42;font-family:'Liberation Sans';font-size:12.6px;">10</div>
<div class="a" style="left:1px;top:447px;width:25px;height:1px;background:#c0c0c0;"></div>
<div class="t" style="left:7.30px;top:433px;color:#1e6e42;font-family:'Liberation Sans';font-size:12.6px;">11</div>
<div class="a" style="left:1px;top:467px;width:25px;height:1px;background:#c0c0c0;"></div>
<div class="t" style="left:6.80px;top:453px;color:#1e6e42;font-family:'Liberation Sans';font-size:12.6px;">12</div>
<div class="a" style="left:1px;top:487px;width:25px;height:1px;background:#c0c0c0;"></div>
<div class="t" style="left:6.80px;top:473px;color:#1e6e42;font-family:'Liberation Sans';font-size:12.6px;">13</div>
<div class="a" style="left:1px;top:507px;width:25px;height:1px;background:#c0c0c0;"></div>
<div class="t" style="left:6.80px;top:493px;color:#1e6e42;font-family:'Liberation Sans';font-size:12.6px;">14</div>
<div class="a" style="left:1px;top:527px;width:25px;height:1px;background:#c0c0c0;"></div>
<div class="t" style="left:6.80px;top:513px;color:#1e6e42;font-family:'Liberation Sans';font-size:12.6px;">15</div>
<div class="a" style="left:1px;top:547px;width:25px;height:1px;background:#c0c0c0;"></div>
<div class="t" style="left:6.80px;top:533px;color:#1e6e42;font-family:'Liberation Sans';font-size:12.6px;">16</div>
<div class="a" style="left:1px;top:567px;width:25px;height:1px;background:#c0c0c0;"></div>
<div class="t" style="left:6.80px;top:553px;color:#444444;font-family:'Liberation Sans';font-size:12.6px;">17</div>
<div class="a" style="left:1px;top:587px;width:25px;height:1px;background:#c0c0c0;"></div>
<div class="t" style="left:6.80px;top:573px;color:#444444;font-family:'Liberation Sans';font-size:12.6px;">18</div>
<div class="a" style="left:1px;top:607px;width:25px;height:1px;background:#c0c0c0;"></div>
<div class="t" style="left:6.80px;top:593px;color:#444444;font-family:'Liberation Sans';font-size:12.6px;">19</div>
<div class="a" style="left:1px;top:627px;width:25px;height:1px;background:#c0c0c0;"></div>
<div class="t" style="left:7.30px;top:613px;color:#444444;font-family:'Liberation Sans';font-size:12.6px;">20</div>
<div class="a" style="left:1px;top:647px;width:25px;height:1px;background:#c0c0c0;"></div>
<div class="t" style="left:7.30px;top:633px;color:#444444;font-family:'Liberation Sans';font-size:12.6px;">21</div>
<div class="a" style="left:1px;top:667px;width:25px;height:1px;background:#c0c0c0;"></div>
<div class="t" style="left:7.30px;top:653px;color:#444444;font-family:'Liberation Sans';font-size:12.6px;">22</div>
<div class="a" style="left:1px;top:687px;width:25px;height:1px;background:#c0c0c0;"></div>
<div class="t" style="left:7.30px;top:673px;color:#444444;font-family:'Liberation Sans';font-size:12.6px;">23</div>
<div class="a" style="left:1px;top:707px;width:25px;height:1px;background:#c0c0c0;"></div>
<div class="t" style="left:7.30px;top:693px;color:#444444;font-family:'Liberation Sans';font-size:12.6px;">24</div>
<div class="a" style="left:1px;top:727px;width:25px;height:1px;background:#c0c0c0;"></div>
<div class="t" style="left:7.30px;top:713px;color:#444444;font-family:'Liberation Sans';font-size:12.6px;">25</div>
<div class="a" style="left:1px;top:747px;width:25px;height:1px;background:#c0c0c0;"></div>
<div class="t" style="left:7.30px;top:733px;color:#444444;font-family:'Liberation Sans';font-size:12.6px;">26</div>
<div class="a" style="left:1px;top:767px;width:25px;height:1px;background:#c0c0c0;"></div>
<div class="t" style="left:7.30px;top:753px;color:#444444;font-family:'Liberation Sans';font-size:12.6px;">27</div>
<div class="a" style="left:1px;top:787px;width:25px;height:1px;background:#c0c0c0;"></div>
<div class="t" style="left:7.30px;top:773px;color:#444444;font-family:'Liberation Sans';font-size:12.6px;">28</div>
<div class="a" style="left:1px;top:807px;width:25px;height:1px;background:#c0c0c0;"></div>
<div class="t" style="left:7.30px;top:793px;color:#444444;font-family:'Liberation Sans';font-size:12.6px;">29</div>
<div class="a" style="left:1px;top:827px;width:25px;height:1px;background:#c0c0c0;"></div>
<div class="t" style="left:7.30px;top:813px;color:#444444;font-family:'Liberation Sans';font-size:12.6px;">30</div>
<div class="a" style="left:1px;top:847px;width:25px;height:1px;background:#c0c0c0;"></div>
<div class="t" style="left:7.30px;top:833px;color:#444444;font-family:'Liberation Sans';font-size:12.6px;">31</div>
<div class="a" style="left:1px;top:867px;width:25px;height:1px;background:#c0c0c0;"></div>
<div class="t" style="left:7.30px;top:853px;color:#444444;font-family:'Liberation Sans';font-size:12.6px;">32</div>
<div class="t" style="left:7.30px;top:873px;color:#444444;font-family:'Liberation Sans';font-size:12.6px;">33</div>
<div class="a" style="left:27px;top:268px;width:364px;height:20px;background:#a9afbd;"></div>
<div class="a" style="left:27px;top:268px;width:125px;height:20px;background:#d9e1f2;"></div>
<div class="a" style="left:27px;top:287px;width:364px;height:1px;background:#6f84ab;"></div>
<div class="a" style="left:27px;top:288px;width:364px;height:240px;background:#c6c6c6;"></div>
<div class="a" style="left:27px;top:528px;width:364px;height:19px;background:#a9afbd;"></div>
<div class="a" style="left:27px;top:527px;width:364px;height:1px;background:#6f84ab;"></div>
<div class="a" style="left:25px;top:266px;width:368px;height:283px;box-sizing:border-box;border:2px solid #217346;"></div>
<div class="a" style="left:27px;top:268px;width:364px;height:279px;box-sizing:border-box;border:1px solid #ffffff;"></div>
<div class="a" style="left:388px;top:544px;width:7px;height:7px;background:#217346;box-sizing:border-box;border:1px solid #ffffff;"></div>
<div class="a" style="left:135px;top:270px;width:17px;height:16px;background:#f4f4f4;box-sizing:border-box;border:1px solid #c8c8c8;"></div>
<svg class="a" style="left:139px;top:275px;" width="9" height="6" viewBox="0 0 9 6"><path d="M0.5 0.5 H8.5 L4.5 5Z" fill="#6b6b6b"/></svg>
<div class="t" style="left:28.92px;top:273px;color:#000000;font-family:'Liberation Sans';font-size:12.6px;font-weight:bold;transform:scaleX(0.9814);">Rótulos de Linha</div>
<div class="t" style="left:155.00px;top:273px;color:#000000;font-family:'Liberation Sans';font-size:12.6px;font-weight:bold;transform:scaleX(0.9944);">Soma de Receitas</div>
<div class="t" style="left:271.00px;top:273px;color:#000000;font-family:'Liberation Sans';font-size:12.6px;font-weight:bold;transform:scaleX(0.9861);">Soma de Despesas</div>
<div class="t" style="left:28.90px;top:293px;color:#000000;font-family:'Liberation Sans';font-size:12.6px;transform:scaleX(1.0902);-webkit-text-stroke:0.2px currentColor;">Janeiro</div>
<div class="t" style="left:230.60px;top:293px;color:#000000;font-family:'Liberation Sans';font-size:12.6px;-webkit-text-stroke:0.2px currentColor;">15000</div>
<div class="t" style="left:353.30px;top:293px;color:#000000;font-family:'Liberation Sans';font-size:12.6px;-webkit-text-stroke:0.2px currentColor;">10300</div>
<div class="t" style="left:28.47px;top:313px;color:#000000;font-family:'Liberation Sans';font-size:12.6px;transform:scaleX(1.1327);-webkit-text-stroke:0.2px currentColor;">Fevereiro</div>
<div class="t" style="left:231.60px;top:313px;color:#000000;font-family:'Liberation Sans';font-size:12.6px;transform:scaleX(0.9714);-webkit-text-stroke:0.2px currentColor;">23200</div>
<div class="t" style="left:361.14px;top:313px;color:#000000;font-family:'Liberation Sans';font-size:12.6px;transform:scaleX(0.9700);-webkit-text-stroke:0.2px currentColor;">7500</div>
<div class="t" style="left:28.51px;top:333px;color:#000000;font-family:'Liberation Sans';font-size:12.6px;transform:scaleX(1.0882);-webkit-text-stroke:0.2px currentColor;">Março</div>
<div class="t" style="left:230.57px;top:333px;color:#000000;font-family:'Liberation Sans';font-size:12.6px;transform:scaleX(1.0303);-webkit-text-stroke:0.2px currentColor;">11300</div>
<div class="t" style="left:361.14px;top:333px;color:#000000;font-family:'Liberation Sans';font-size:12.6px;transform:scaleX(0.9700);-webkit-text-stroke:0.2px currentColor;">7500</div>
<div class="t" style="left:29.60px;top:353px;color:#000000;font-family:'Liberation Sans';font-size:12.6px;transform:scaleX(1.1560);-webkit-text-stroke:0.2px currentColor;">Abril</div>
<div class="t" style="left:231.60px;top:353px;color:#000000;font-family:'Liberation Sans';font-size:12.6px;transform:scaleX(0.9714);-webkit-text-stroke:0.2px currentColor;">24550</div>
<div class="t" style="left:353.30px;top:353px;color:#000000;font-family:'Liberation Sans';font-size:12.6px;-webkit-text-stroke:0.2px currentColor;">14500</div>
<div class="t" style="left:28.46px;top:373px;color:#000000;font-family:'Liberation Sans';font-size:12.6px;transform:scaleX(1.1385);-webkit-text-stroke:0.2px currentColor;">Maio</div>
<div class="t" style="left:230.60px;top:373px;color:#000000;font-family:'Liberation Sans';font-size:12.6px;-webkit-text-stroke:0.2px currentColor;">12300</div>
<div class="t" style="left:361.14px;top:373px;color:#000000;font-family:'Liberation Sans';font-size:12.6px;transform:scaleX(0.9700);-webkit-text-stroke:0.2px currentColor;">8000</div>
<div class="t" style="left:28.90px;top:393px;color:#000000;font-family:'Liberation Sans';font-size:12.6px;transform:scaleX(1.0765);-webkit-text-stroke:0.2px currentColor;">Junho</div>
<div class="t" style="left:230.60px;top:393px;color:#000000;font-family:'Liberation Sans';font-size:12.6px;-webkit-text-stroke:0.2px currentColor;">18740</div>
<div class="t" style="left:353.30px;top:393px;color:#000000;font-family:'Liberation Sans';font-size:12.6px;-webkit-text-stroke:0.2px currentColor;">14320</div>
<div class="t" style="left:28.90px;top:413px;color:#000000;font-family:'Liberation Sans';font-size:12.6px;transform:scaleX(1.0867);-webkit-text-stroke:0.2px currentColor;">Julho</div>
<div class="t" style="left:230.60px;top:413px;color:#000000;font-family:'Liberation Sans';font-size:12.6px;-webkit-text-stroke:0.2px currentColor;">15600</div>
<div class="t" style="left:354.30px;top:413px;color:#000000;font-family:'Liberation Sans';font-size:12.6px;transform:scaleX(0.9714);-webkit-text-stroke:0.2px currentColor;">34000</div>
<div class="t" style="left:29.60px;top:433px;color:#000000;font-family:'Liberation Sans';font-size:12.6px;transform:scaleX(1.0769);-webkit-text-stroke:0.2px currentColor;">Agosto</div>
<div class="t" style="left:231.60px;top:433px;color:#000000;font-family:'Liberation Sans';font-size:12.6px;transform:scaleX(0.9714);-webkit-text-stroke:0.2px currentColor;">39980</div>
<div class="t" style="left:354.30px;top:433px;color:#000000;font-family:'Liberation Sans';font-size:12.6px;transform:scaleX(0.9714);-webkit-text-stroke:0.2px currentColor;">26500</div>
<div class="t" style="left:28.47px;top:453px;color:#000000;font-family:'Liberation Sans';font-size:12.6px;transform:scaleX(1.1340);-webkit-text-stroke:0.2px currentColor;">Setembro</div>
<div class="t" style="left:231.60px;top:453px;color:#000000;font-family:'Liberation Sans';font-size:12.6px;transform:scaleX(0.9714);-webkit-text-stroke:0.2px currentColor;">45050</div>
<div class="t" style="left:354.30px;top:453px;color:#000000;font-family:'Liberation Sans';font-size:12.6px;transform:scaleX(0.9714);-webkit-text-stroke:0.2px currentColor;">32750</div>
<div class="t" style="left:29.60px;top:473px;color:#000000;font-family:'Liberation Sans';font-size:12.6px;transform:scaleX(1.1333);-webkit-text-stroke:0.2px currentColor;">Outubro</div>
<div class="t" style="left:231.60px;top:473px;color:#000000;font-family:'Liberation Sans';font-size:12.6px;transform:scaleX(0.9714);-webkit-text-stroke:0.2px currentColor;">43560</div>
<div class="t" style="left:354.30px;top:473px;color:#000000;font-family:'Liberation Sans';font-size:12.6px;transform:scaleX(0.9714);-webkit-text-stroke:0.2px currentColor;">45000</div>
<div class="t" style="left:28.46px;top:493px;color:#000000;font-family:'Liberation Sans';font-size:12.6px;transform:scaleX(1.1386);-webkit-text-stroke:0.2px currentColor;">Novembro</div>
<div class="t" style="left:231.60px;top:493px;color:#000000;font-family:'Liberation Sans';font-size:12.6px;transform:scaleX(0.9714);-webkit-text-stroke:0.2px currentColor;">71800</div>
<div class="t" style="left:354.30px;top:493px;color:#000000;font-family:'Liberation Sans';font-size:12.6px;transform:scaleX(0.9714);-webkit-text-stroke:0.2px currentColor;">23450</div>
<div class="t" style="left:28.49px;top:513px;color:#000000;font-family:'Liberation Sans';font-size:12.6px;transform:scaleX(1.1070);-webkit-text-stroke:0.2px currentColor;">Dezembro</div>
<div class="t" style="left:231.60px;top:513px;color:#000000;font-family:'Liberation Sans';font-size:12.6px;transform:scaleX(0.9714);-webkit-text-stroke:0.2px currentColor;">85000</div>
<div class="t" style="left:354.30px;top:513px;color:#000000;font-family:'Liberation Sans';font-size:12.6px;transform:scaleX(0.9714);-webkit-text-stroke:0.2px currentColor;">40500</div>
<div class="t" style="left:29.60px;top:533px;color:#000000;font-family:'Liberation Sans';font-size:12.6px;font-weight:bold;transform:scaleX(1.0437);">Total Geral</div>
<div class="t" style="left:224.00px;top:533px;color:#000000;font-family:'Liberation Sans';font-size:12.6px;font-weight:bold;transform:scaleX(0.9881);">406080</div>
<div class="t" style="left:347.30px;top:533px;color:#000000;font-family:'Liberation Sans';font-size:12.6px;font-weight:bold;transform:scaleX(0.9881);">264320</div>
<div class="a" style="left:1082px;top:208px;width:22px;height:672px;background:#e6e6e6;"></div>
<div class="a" style="left:1086px;top:210px;width:15px;height:15px;background:#ffffff;box-sizing:border-box;border:1px solid #6b6b6b;"></div>
<svg class="a" style="left:1089px;top:214px;" width="9" height="6" viewBox="0 0 9 6"><path d="M0.5 5.5 H8.5 L4.5 1Z" fill="#6b6b6b"/></svg>
<div class="a" style="left:1086px;top:224px;width:15px;height:621px;background:#ffffff;box-sizing:border-box;border:1px solid #6b6b6b;border-top-width:2px;"></div>
<div class="a" style="left:1087px;top:845px;width:13px;height:21px;background:#d6d6d6;"></div>
<div class="a" style="left:1086px;top:866px;width:15px;height:15px;background:#ffffff;box-sizing:border-box;border:1px solid #6b6b6b;"></div>
<svg class="a" style="left:1089px;top:870px;" width="9" height="6" viewBox="0 0 9 6"><path d="M0.5 0.5 H8.5 L4.5 5Z" fill="#6b6b6b"/></svg>
<div class="a" style="left:1104px;top:198px;width:394px;height:710px;background:#e6e6e6;"></div>
<div class="a" style="left:1104px;top:210px;width:1px;height:698px;background:#c8c8c8;"></div>
<div class="t" style="left:1117.16px;top:224px;color:#22704a;font-family:'Liberation Sans';font-size:22px;transform:scaleX(0.9382);">Campos da Tabela Dinâmica</div>
<svg class="a" style="left:1427px;top:228px;" width="11" height="7" viewBox="0 0 11 7"><path d="M0.5 0.5 H10.5 L5.5 6Z" fill="#5a5a5a"/></svg>
<svg class="a" style="left:1468px;top:225px;" width="12" height="12" viewBox="0 0 12 12"><path d="M1.5 1.5 L10.5 10.5 M10.5 1.5 L1.5 10.5" stroke="#666" stroke-width="2.1"/></svg>
<div class="t" style="left:1117.14px;top:263px;color:#333333;font-family:'Liberation Sans';font-size:12.3px;transform:scaleX(0.9605);">Escolha campos para adicionar ao relatório:</div>
<div class="a" style="left:1440px;top:255px;width:44px;height:27px;background:#ffffff;box-sizing:border-box;border:1px solid #bdbdbd;"></div>
<svg class="a" style="left:1448px;top:259px;" width="18" height="18" viewBox="0 0 18 18"><g fill="none" stroke="#555" stroke-width="1.1"><circle cx="9" cy="9" r="2.8"/>
<path d="M7.6 2 H10.4 L10.9 3.9 L12.6 4.9 L14.5 4.3 L15.9 6.7 L14.5 8.1 V9.9 L15.9 11.3 L14.5 13.7 L12.6 13.1 L10.9 14.1 L10.4 16 H7.6 L7.1 14.1 L5.4 13.1 L3.5 13.7 L2.1 11.3 L3.5 9.9 V8.1 L2.1 6.7 L3.5 4.3 L5.4 4.9 L7.1 3.9 Z"/></g></svg>
<svg class="a" style="left:1471px;top:265px;" width="9" height="5" viewBox="0 0 9 5"><path d="M0.5 0.5 H8.5 L4.5 4.5Z" fill="#555"/></svg>
<div class="a" style="left:1117px;top:295px;width:367px;height:20px;background:#ffffff;box-sizing:border-box;border:1px solid #bdbdbd;"></div>
<div class="t" style="left:1118.23px;top:298px;color:#666666;font-family:'Liberation Sans';font-size:12.3px;transform:scaleX(0.9739);">Procurar</div>
<svg class="a" style="left:1466px;top:297px;" width="18" height="17" viewBox="0 0 18 17"><g fill="none" stroke="#444" stroke-width="1.1"><circle cx="11" cy="6.5" r="5"/><path d="M7.5 10 L1.5 16"/></g></svg>
<div class="a" style="left:1117px;top:331px;width:367px;height:227px;background:#fdfdfd;"></div>
<div class="a" style="left:1119px;top:332px;width:13px;height:13px;background:#ffffff;box-sizing:border-box;border:1px solid #6b6b6b;"></div>
<svg class="a" style="left:1119px;top:332px;" width="13" height="13" viewBox="0 0 13 13"><path d="M3 6.5 L5.5 9.5 L10.5 3" fill="none" stroke="#555" stroke-width="1.3"/></svg>
<div class="t" style="left:1137.73px;top:333px;color:#222222;font-family:'Liberation Sans';font-size:12.3px;font-weight:bold;transform:scaleX(0.9696);">Mês</div>
<div class="a" style="left:1119px;top:351px;width:13px;height:13px;background:#ffffff;box-sizing:border-box;border:1px solid #6b6b6b;"></div>
<svg class="a" style="left:1119px;top:351px;" width="13" height="13" viewBox="0 0 13 13"><path d="M3 6.5 L5.5 9.5 L10.5 3" fill="none" stroke="#555" stroke-width="1.3"/></svg>
<div class="t" style="left:1137.76px;top:352px;color:#222222;font-family:'Liberation Sans';font-size:12.3px;font-weight:bold;transform:scaleX(0.9449);">Receitas</div>
<div class="a" style="left:1119px;top:370px;width:13px;height:13px;background:#ffffff;box-sizing:border-box;border:1px solid #6b6b6b;"></div>
<svg class="a" style="left:1119px;top:370px;" width="13" height="13" viewBox="0 0 13 13"><path d="M3 6.5 L5.5 9.5 L10.5 3" fill="none" stroke="#555" stroke-width="1.3"/></svg>
<div class="t" style="left:1137.80px;top:371px;color:#222222;font-family:'Liberation Sans';font-size:12.3px;font-weight:bold;transform:scaleX(0.8982);">Despesas</div>
<div class="a" style="left:1119px;top:389px;width:13px;height:13px;background:#ffffff;box-sizing:border-box;border:1px solid #6b6b6b;"></div>
<div class="t" style="left:1137.76px;top:390px;color:#222222;font-family:'Liberation Sans';font-size:12.3px;transform:scaleX(0.9365);">Diferença</div>
<div class="t" style="left:1118.66px;top:416px;color:#333333;font-family:'Liberation Sans';font-size:12.3px;transform:scaleX(0.9363);">Mais Tabelas...</div>
<div class="a" style="left:1119px;top:574px;width:365px;height:0;border-top:1px dotted #b0b0b0;"></div>
<div class="t" style="left:1121.30px;top:581px;color:#333333;font-family:'Liberation Sans';font-size:12.3px;transform:scaleX(0.9326);">Arrastar campos entre as áreas abaixo:</div>
<div class="a" style="left:1301px;top:611px;width:1px;height:243px;background:#c6c6c6;"></div>
<div class="a" style="left:1120px;top:732px;width:364px;height:1px;background:#c6c6c6;"></div>
<div class="a" style="left:1120px;top:631px;width:175px;height:95px;background:#fdfdfd;"></div>
<div class="a" style="left:1304px;top:631px;width:180px;height:95px;background:#fdfdfd;"></div>
<div class="a" style="left:1120px;top:759px;width:175px;height:95px;background:#fdfdfd;"></div>
<div class="a" style="left:1304px;top:759px;width:180px;height:95px;background:#fdfdfd;"></div>
<svg class="a" style="left:1123px;top:612px;" width="14" height="13" viewBox="0 0 14 13"><path d="M0.5 0.5 H12.5 L8 5.5 V12.5 H5 V5.5 Z" fill="#6b6b6b"/></svg>
<div class="t" style="left:1142.32px;top:614px;color:#333333;font-family:'Liberation Sans';font-size:12.3px;transform:scaleX(0.9844);">Filtros</div>
<svg class="a" style="left:1308px;top:613px;" width="12" height="12" viewBox="0 0 12 12"><g fill="#7a7a7a"><rect x="1" y="1" width="2" height="10"/><rect x="4" y="1" width="1" height="10"/><rect x="6.2" y="1" width="1" height="10"/><rect x="8.4" y="1" width="1" height="10"/></g></svg>
<div class="t" style="left:1327.40px;top:614px;color:#333333;font-family:'Liberation Sans';font-size:12.3px;transform:scaleX(0.9422);">Colunas</div>
<svg class="a" style="left:1124px;top:741px;" width="12" height="11" viewBox="0 0 12 11"><g fill="#7a7a7a"><rect x="1" y="1" width="10" height="2"/><rect x="1" y="4" width="10" height="1"/><rect x="1" y="6.2" width="10" height="1"/><rect x="1" y="8.4" width="10" height="1"/></g></svg>
<div class="t" style="left:1142.45px;top:742px;color:#333333;font-family:'Liberation Sans';font-size:12.3px;transform:scaleX(0.9514);">Linhas</div>
<svg class="a" style="left:1309px;top:741px;" width="12" height="12" viewBox="0 0 12 12"><path d="M10 1.5 H1.5 L6 6 L1.5 10.5 H10" fill="none" stroke="#7a7a7a" stroke-width="1.2"/></svg>
<div class="t" style="left:1327.00px;top:742px;color:#333333;font-family:'Liberation Sans';font-size:12.3px;transform:scaleX(0.9268);">Valores</div>
<div class="a" style="left:1305px;top:633px;width:178px;height:20px;background:#ffffff;box-sizing:border-box;border:1px solid #ababab;"></div>
<svg class="a" style="left:1313px;top:636px;" width="11" height="13" viewBox="0 0 11 13"><path d="M10.5 1 H1 L6 6.5 L1 12 H10.5" fill="none" stroke="#333" stroke-width="1.1"/></svg>
<div class="t" style="left:1330.20px;top:637px;color:#222222;font-family:'Liberation Sans';font-size:12.3px;transform:scaleX(0.9073);">Valores</div>
<svg class="a" style="left:1465px;top:640px;" width="9" height="6" viewBox="0 0 9 6"><path d="M0.5 0.5 H8.5 L4.5 5Z" fill="#444"/></svg>
<div class="a" style="left:1121px;top:761px;width:173px;height:17px;background:#ffffff;box-sizing:border-box;border:1px solid #ababab;"></div>
<div class="t" style="left:1127.43px;top:764px;color:#222222;font-family:'Liberation Sans';font-size:12.3px;transform:scaleX(0.9682);">Mês</div>
<svg class="a" style="left:1276px;top:767px;" width="9" height="6" viewBox="0 0 9 6"><path d="M0.5 0.5 H8.5 L4.5 5Z" fill="#444"/></svg>
<div class="a" style="left:1305px;top:761px;width:178px;height:17px;background:#ffffff;box-sizing:border-box;border:1px solid #ababab;"></div>
<div class="t" style="left:1311.41px;top:764px;color:#222222;font-family:'Liberation Sans';font-size:12.3px;transform:scaleX(0.8889);">Soma de Receitas</div>
<svg class="a" style="left:1465px;top:767px;" width="9" height="6" viewBox="0 0 9 6"><path d="M0.5 0.5 H8.5 L4.5 5Z" fill="#444"/></svg>
<div class="a" style="left:1305px;top:780px;width:178px;height:17px;background:#ffffff;box-sizing:border-box;border:1px solid #ababab;"></div>
<div class="t" style="left:1311.41px;top:783px;color:#222222;font-family:'Liberation Sans';font-size:12.3px;transform:scaleX(0.8896);">Soma de Despesas</div>
<svg class="a" style="left:1465px;top:786px;" width="9" height="6" viewBox="0 0 9 6"><path d="M0.5 0.5 H8.5 L4.5 5Z" fill="#444"/></svg>
<div class="a" style="left:1123px;top:879px;width:13px;height:13px;background:#ffffff;box-sizing:border-box;border:1px solid #6b6b6b;"></div>
<div class="t" style="left:1141.05px;top:879px;color:#333333;font-family:'Liberation Sans';font-size:12.3px;transform:scaleX(0.9497);">Diferir Atualização de Esquema</div>
<div class="a" style="left:1429px;top:874px;width:54px;height:21px;background:#f3f3f3;box-sizing:border-box;border:1px solid #e0e0e0;"></div>
<div class="t" style="left:1433.50px;top:879px;color:#a6a6a6;font-family:'Liberation Sans';font-size:12.3px;transform:scaleX(0.9333);">Atualizar</div>
<div class="a" style="left:1497px;top:198px;width:1px;height:710px;background:#c8c8c8;"></div>
<div class="a" style="left:1px;top:880px;width:1103px;height:28px;background:#e6e6e6;"></div>
<div class="a" style="left:1px;top:880px;width:101px;height:1px;background:#a6a6a6;"></div>
<div class="a" style="left:163px;top:880px;width:919px;height:1px;background:#a6a6a6;"></div>
<div class="a" style="left:101px;top:880px;width:63px;height:24px;background:#ffffff;"></div>
<div class="a" style="left:101px;top:880px;width:1px;height:24px;background:#a6a6a6;"></div>
<div class="a" style="left:163px;top:880px;width:1px;height:24px;background:#a6a6a6;"></div>
<div class="a" style="left:101px;top:903px;width:63px;height:2px;background:#1e6e42;"></div>
<svg class="a" style="left:25px;top:889px;" width="9" height="10" viewBox="0 0 9 10"><path d="M7.5 0.5 V9.5 L1.5 5Z" fill="#b0b0b0"/></svg>
<svg class="a" style="left:55px;top:889px;" width="9" height="10" viewBox="0 0 9 10"><path d="M1.5 0.5 V9.5 L7.5 5Z" fill="#b0b0b0"/></svg>
<div class="t" style="left:113.40px;top:887px;color:#1e6e42;font-family:'Liberation Sans';font-size:13px;font-weight:bold;">Totais</div>
<div class="t" style="left:177.60px;top:887px;color:#444444;font-family:'Liberation Sans';font-size:13px;transform:scaleX(1.0182);">Original</div>
<div class="a" style="left:236px;top:884px;width:1px;height:19px;background:#a0a0a0;"></div>
<svg class="a" style="left:269px;top:885px;" width="18" height="18" viewBox="0 0 18 18"><circle cx="9" cy="9" r="7.6" fill="none" stroke="#666" stroke-width="1.2"/><path d="M9 4.5 V13.5 M4.5 9 H13.5" stroke="#666" stroke-width="1.4"/></svg>
<div class="a" style="left:663px;top:889px;width:2px;height:2px;background:#b0b0b0;"></div>
<div class="a" style="left:663px;top:893px;width:2px;height:2px;background:#b0b0b0;"></div>
<div class="a" style="left:663px;top:897px;width:2px;height:2px;background:#b0b0b0;"></div>
<div class="a" style="left:680px;top:887px;width:403px;height:15px;background:#d6d6d6;"></div>
<div class="a" style="left:680px;top:887px;width:15px;height:15px;background:#ffffff;box-sizing:border-box;border:1px solid #6b6b6b;"></div>
<svg class="a" style="left:684px;top:890px;" width="6" height="9" viewBox="0 0 6 9"><path d="M5 0.5 V8.5 L0.5 4.5Z" fill="#6b6b6b"/></svg>
<div class="a" style="left:694px;top:887px;width:345px;height:15px;background:#ffffff;box-sizing:border-box;border:1px solid #6b6b6b;border-left-width:2px;"></div>
<div class="a" style="left:1068px;top:887px;width:15px;height:15px;background:#ffffff;box-sizing:border-box;border:1px solid #6b6b6b;"></div>
<svg class="a" style="left:1072px;top:890px;" width="6" height="9" viewBox="0 0 6 9"><path d="M1 0.5 V8.5 L5.5 4.5Z" fill="#6b6b6b"/></svg>
<div class="a" style="left:1px;top:908px;width:1497px;height:22px;background:#f3f2f1;"></div>
<div class="a" style="left:1px;top:908px;width:1497px;height:1px;background:#c8c8c8;"></div>
<div class="t" style="left:7.43px;top:914px;color:#444444;font-family:'Liberation Sans';font-size:12.3px;transform:scaleX(0.9714);">Pronto</div>
<svg class="a" style="left:62px;top:912px;" width="17" height="15" viewBox="0 0 17 15"><g fill="none" stroke="#444" stroke-width="1"><path d="M1.5 1.5 H14.5 V5"/><path d="M1.5 1.5 V12.5 H6"/><path d="M3 4.5 H13 M3 7 H6 M3 9.5 H6"/><circle cx="11" cy="10" r="3.8"/></g><circle cx="11" cy="10" r="1.8" fill="#444"/></svg>
<div class="t" style="left:906.80px;top:913px;color:#444444;font-family:'Liberation Sans';font-size:12.3px;transform:scaleX(0.9000);">Média: 51569,23077</div>
<div class="t" style="left:1024.80px;top:913px;color:#444444;font-family:'Liberation Sans';font-size:12.3px;transform:scaleX(0.9105);">Contar: 42</div>
<div class="t" style="left:1092.52px;top:913px;color:#444444;font-family:'Liberation Sans';font-size:12.3px;transform:scaleX(0.8779);">Soma: 1340800</div>
<div class="a" style="left:1187px;top:909px;width:40px;height:21px;background:#d2d2d2;"></div>
<svg class="a" style="left:1199px;top:911px;" width="15" height="15" viewBox="0 0 15 15"><g fill="none" stroke="#444" stroke-width="1"><rect x="1.5" y="1.5" width="12" height="12"/><path d="M5.5 1.5 V13.5 M9.5 1.5 V13.5 M1.5 5.5 H13.5 M1.5 9.5 H13.5"/></g></svg>
<svg class="a" style="left:1239px;top:911px;" width="16" height="15" viewBox="0 0 16 15"><g fill="none" stroke="#444" stroke-width="1"><rect x="1.5" y="1.5" width="13" height="12"/><rect x="4.5" y="3.5" width="7" height="8"/><path d="M6 5.5 H10 M6 7.5 H10 M6 9.5 H10"/></g></svg>
<svg class="a" style="left:1279px;top:911px;" width="16" height="15" viewBox="0 0 16 15"><g fill="none" stroke="#444" stroke-width="1"><path d="M1.5 13.5 V1.5 H14.5 V13.5"/><path d="M1.5 9.5 H6.5 V1.5 M9.5 1.5 V6.5"/></g></svg>
<div class="a" style="left:1313px;top:918px;width:8px;height:1px;background:#555;"></div>
<div class="a" style="left:1326px;top:918px;width:100px;height:1px;background:#777;"></div>
<div class="a" style="left:1374px;top:913px;width:5px;height:12px;background:#5a5a5a;"></div>
<div class="a" style="left:1431px;top:918px;width:8px;height:1px;background:#555;"></div>
<div class="a" style="left:1434px;top:914px;width:1px;height:9px;background:#555;"></div>
<div class="t" style="left:1451.74px;top:913px;color:#444444;font-family:'Liberation Sans';font-size:12.3px;transform:scaleX(0.8567);">100%</div>
<div class="a" style="left:435px;top:195px;width:634px;height:600px;box-shadow:0 3px 16px 0 rgba(0,0,0,0.34);"></div>
<div class="a" style="left:435px;top:195px;width:634px;height:600px;background:#f0f0f0;box-sizing:border-box;border:1px solid #6a6a6a;"></div>
<div class="a" style="left:436px;top:196px;width:632px;height:30px;background:#ffffff;"></div>
<div class="t" style="left:443.25px;top:205px;color:#111111;font-family:'Liberation Sans';font-size:12.3px;transform:scaleX(0.9526);">Inserir Gráfico</div>
<div class="t" style="left:996.50px;top:204px;color:#222222;font-family:'Liberation Sans';font-size:13.5px;">?</div>
<svg class="a" style="left:1038px;top:203px;" width="14" height="14" viewBox="0 0 14 14"><path d="M1.5 1.5 L12.5 12.5 M12.5 1.5 L1.5 12.5" stroke="#111" stroke-width="1.1"/></svg>
<div class="a" style="left:442px;top:254px;width:618px;height:505px;background:#ffffff;box-sizing:border-box;border:1px solid #d9d9d9;"></div>
<div class="a" style="left:442px;top:233px;width:108px;height:22px;background:#ffffff;box-sizing:border-box;border:1px solid #d9d9d9;border-bottom:none;"></div>
<div class="t" style="left:449.00px;top:238px;color:#111111;font-family:'Liberation Sans';font-size:12.3px;transform:scaleX(0.9316);">Todos os Gráficos</div>
<div class="a" style="left:631px;top:269px;width:1px;height:477px;background:#cfcfcf;"></div>
<div class="a" style="left:455px;top:387px;width:165px;height:24px;background:#cdcdcd;box-sizing:border-box;border:1px solid #a0a0a0;"></div>
<div class="t" style="left:486.70px;top:273px;color:#444444;font-family:'Liberation Sans';font-size:12.3px;transform:scaleX(0.9039);">Recentes</div>
<div class="t" style="left:486.60px;top:297px;color:#444444;font-family:'Liberation Sans';font-size:12.3px;">Modelos</div>
<div class="t" style="left:487.60px;top:321px;color:#444444;font-family:'Liberation Sans';font-size:12.3px;transform:scaleX(0.9333);">Colunas</div>
<div class="t" style="left:486.65px;top:345px;color:#444444;font-family:'Liberation Sans';font-size:12.3px;transform:scaleX(0.9486);">Linhas</div>
<div class="t" style="left:487.60px;top:369px;color:#444444;font-family:'Liberation Sans';font-size:12.3px;transform:scaleX(0.9395);">Circular</div>
<div class="t" style="left:486.71px;top:393px;color:#222222;font-family:'Liberation Sans';font-size:12.3px;transform:scaleX(0.8914);">Barras</div>
<div class="t" style="left:487.60px;top:417px;color:#444444;font-family:'Liberation Sans';font-size:12.3px;transform:scaleX(0.8846);">Área</div>
<div class="t" style="left:486.69px;top:441px;color:#444444;font-family:'Liberation Sans';font-size:12.3px;transform:scaleX(0.9098);">Dispersão (XY)</div>
<div class="t" style="left:486.61px;top:465px;color:#444444;font-family:'Liberation Sans';font-size:12.3px;transform:scaleX(0.9867);">Mapa</div>
<div class="t" style="left:487.60px;top:489px;color:#444444;font-family:'Liberation Sans';font-size:12.3px;transform:scaleX(0.9308);">Cotações</div>
<div class="t" style="left:486.65px;top:513px;color:#444444;font-family:'Liberation Sans';font-size:12.3px;transform:scaleX(0.9519);">Superfície</div>
<div class="t" style="left:486.70px;top:537px;color:#444444;font-family:'Liberation Sans';font-size:12.3px;transform:scaleX(0.8970);">Radar</div>
<div class="t" style="left:487.60px;top:561px;color:#444444;font-family:'Liberation Sans';font-size:12.3px;transform:scaleX(0.9184);">Treemap</div>
<div class="t" style="left:487.60px;top:585px;color:#444444;font-family:'Liberation Sans';font-size:12.3px;transform:scaleX(0.9378);">Circular de Vários Níveis</div>
<div class="t" style="left:486.61px;top:609px;color:#444444;font-family:'Liberation Sans';font-size:12.3px;transform:scaleX(0.9871);">Histograma</div>
<div class="t" style="left:487.60px;top:633px;color:#444444;font-family:'Liberation Sans';font-size:12.3px;transform:scaleX(0.9312);">Caixa de Bigodes</div>
<div class="t" style="left:487.60px;top:657px;color:#444444;font-family:'Liberation Sans';font-size:12.3px;transform:scaleX(0.8911);">Cascata</div>
<div class="t" style="left:486.58px;top:681px;color:#444444;font-family:'Liberation Sans';font-size:12.3px;transform:scaleX(1.0160);">Funil</div>
<div class="t" style="left:487.60px;top:705px;color:#444444;font-family:'Liberation Sans';font-size:12.3px;transform:scaleX(0.9739);">Combinação</div>
<svg class="a" style="left:458px;top:270px;" width="18" height="18" viewBox="0 0 18 18"><g fill="none" stroke="#444" stroke-width="1.1"><path d="M2 1.5 V6.5 H7"/><path d="M2.5 6 A6 6 0 1 1 12 12.5 L7 17"/></g></svg>
<svg class="a" style="left:458px;top:294px;" width="18" height="18" viewBox="0 0 18 18"><g fill="none" stroke="#444" stroke-width="1"><path d="M1.5 3.5 V15.5 H15.5 V4.5 H8.5 L7.5 2.5 H1.5 Z"/><path d="M1.5 4.5 H8.5"/></g></svg>
<svg class="a" style="left:458px;top:318px;" width="18" height="18" viewBox="0 0 18 18"><g stroke="#444" stroke-width="1" fill="none"><path d="M1.5 1 V15.5 H16"/></g><rect x="4.5" y="3.5" width="4" height="12" fill="#5b9bd5" stroke="#444"/><rect x="10.5" y="7.5" width="4" height="8" fill="#fff" stroke="#444"/></svg>
<svg class="a" style="left:458px;top:342px;" width="18" height="18" viewBox="0 0 18 18"><path d="M1.4 1.2 V16.5 H16.7" fill="none" stroke="#333" stroke-width="1.1"/><path d="M1.4 11.5 L6 4.8 L11.9 10 L16.2 4.8" fill="none" stroke="#333" stroke-width="1"/><path d="M1.4 16 L11.8 3.6 L16.2 9" fill="none" stroke="#2f8ee0" stroke-width="1.1"/><rect x="5" y="3.8" width="2" height="2" fill="#333"/><rect x="10.9" y="9" width="2" height="2" fill="#333"/><rect x="15.2" y="3.8" width="2" height="2" fill="#333"/><rect x="10.8" y="2.6" width="2" height="2" fill="#1f78d0"/><rect x="15.2" y="8" width="2" height="2" fill="#1f78d0"/></svg>
<svg class="a" style="left:458px;top:366px;" width="18" height="18" viewBox="0 0 18 18"><circle cx="9" cy="9" r="7.5" fill="#fff" stroke="#444" stroke-width="1.1"/><path d="M9 9 V1.5 A7.5 7.5 0 0 1 14.3 14.3 Z" fill="#bdbdbd" stroke="#444" stroke-width="1"/></svg>
<svg class="a" style="left:458px;top:390px;" width="18" height="18" viewBox="0 0 18 18"><g fill="none" stroke="#444" stroke-width="1"><path d="M1.5 1 V16.5 H16"/></g><rect x="1.5" y="3.5" width="12" height="4" fill="#5b9bd5" stroke="#444"/><rect x="1.5" y="9.5" width="8" height="4" fill="#fff" stroke="#444"/></svg>
<svg class="a" style="left:458px;top:414px;" width="18" height="18" viewBox="0 0 18 18"><path d="M1.4 3.5 V16.5 H16.5" fill="none" stroke="#aaa" stroke-width="1"/><path d="M1.4 5 L6.4 8.5 L11.9 3.5 L16.5 7.4 V12.6 L11.9 9.3 L6.4 13.8 L1.4 9.8 Z" fill="#8cc0ee" stroke="#3d8fd8" stroke-width="1.1" stroke-linejoin="round"/></svg>
<svg class="a" style="left:458px;top:438px;" width="18" height="18" viewBox="0 0 18 18"><g fill="none" stroke="#444" stroke-width="1"><path d="M1.5 1 V16.5 H17"/></g><circle cx="6" cy="11" r="1.8" fill="#fff" stroke="#1f6fc5"/><circle cx="6" cy="6" r="1.8" fill="#444"/><circle cx="12" cy="6" r="1.8" fill="#444"/><circle cx="12" cy="12" r="1.8" fill="#444"/></svg>
<svg class="a" style="left:458px;top:462px;" width="18" height="18" viewBox="0 0 18 18"><g fill="none" stroke="#333" stroke-width="1.1"><path d="M9.5 1.3 A6.5 6.5 0 1 0 13.8 12.2"/><path d="M4 16.5 H15 M9 14.3 V16.5"/></g><circle cx="9.9" cy="7.9" r="4.3" fill="#2a9a48" stroke="#333" stroke-width="1"/><path d="M7.5 6 L9.5 7.5 L8.5 9.5 M11 5 L12.5 7 L11 10" stroke="#fff" stroke-width="1.1" fill="none"/></svg>
<svg class="a" style="left:458px;top:486px;" width="18" height="18" viewBox="0 0 18 18"><path d="M1.6 1.2 V16.5 H16.8" fill="none" stroke="#333" stroke-width="1.1"/><rect x="3.5" y="8.5" width="3.2" height="8" fill="#8cc0ee" stroke="#1f6fc5" stroke-width="1"/><rect x="8.5" y="11.3" width="3.2" height="5.2" fill="#fff" stroke="#333" stroke-width="1"/><rect x="13.5" y="7.5" width="3" height="9" fill="#c8c8c8" stroke="#666" stroke-width="1"/><path d="M5 2 V7 L6.5 5.5 M10 5 V10 L11.5 8.5 M15 1 V6 L16.5 4.5" fill="none" stroke="#333" stroke-width="1"/></svg>
<svg class="a" style="left:458px;top:510px;" width="18" height="18" viewBox="0 0 18 18"><path d="M3 13.5 L6 9.8 H13.8 L11 13.5 Z" fill="#8cc0ee"/><path d="M6 6.2 H16.5 L13.5 13.5 H3 Z M4.5 9.8 H14.8 M11 6.2 L8 13.5" fill="none" stroke="#333" stroke-width="1.1"/><path d="M6.4 1 V6.2 M3 13.5 L1 17 M14.8 10.5 H17" fill="none" stroke="#333" stroke-width="1.1"/></svg>
<svg class="a" style="left:458px;top:534px;" width="18" height="18" viewBox="0 0 18 18"><path d="M8.4 1.2 L16 6.3 L14.5 16.5 H2.5 L1.3 6.3 Z" fill="none" stroke="#2f8ee0" stroke-width="1.1"/><path d="M8.4 4.5 L12.8 7.5 L11.8 13.5 H5 L4.2 7.5 Z" fill="none" stroke="#2f8ee0" stroke-width="1"/><path d="M8.5 10 V1.2 M8.5 10 L1.3 6.3 M8.5 10 L16 6.3 M8.5 10 L2.5 16.5 M8.5 10 L14.5 16.5" stroke="#333" stroke-width="1"/></svg>
<svg class="a" style="left:458px;top:558px;" width="18" height="18" viewBox="0 0 18 18"><rect x="1.5" y="1.5" width="15" height="15" fill="#fff" stroke="#333" stroke-width="1"/><rect x="1.5" y="1.5" width="7.5" height="15" fill="#8cc0ee" stroke="#1f6fc5" stroke-width="1.1"/><path d="M1.5 9.3 H9" stroke="#1f6fc5" stroke-width="1.1"/><path d="M9 5 H16.5 M12.5 5 V16.5 M12.5 11 H16.5" stroke="#333" stroke-width="1"/></svg>
<svg class="a" style="left:458px;top:582px;" width="18" height="18" viewBox="0 0 18 18"><g fill="none" stroke="#333" stroke-width="1.1"><circle cx="8.8" cy="8.7" r="7.3"/><circle cx="8.8" cy="8.7" r="4.6"/><circle cx="8.8" cy="8.7" r="1.8"/></g><path d="M8.8 1.4 A7.3 7.3 0 0 1 12.5 15 L8.8 8.7 Z" fill="#8cc0ee" stroke="#1f6fc5" stroke-width="1.1"/><path d="M8.8 4.1 A4.6 4.6 0 0 1 11.1 12.7 M8.8 6.9 A1.8 1.8 0 0 1 9.7 10.3" fill="none" stroke="#1f6fc5" stroke-width="1.1"/></svg>
<svg class="a" style="left:458px;top:606px;" width="18" height="18" viewBox="0 0 18 18"><path d="M1.4 1.4 V16.2 H16.6" fill="none" stroke="#333" stroke-width="1.1"/><rect x="3.4" y="6.4" width="3.8" height="9.8" fill="#8cc0ee" stroke="#1f6fc5" stroke-width="1"/><rect x="7.2" y="2.3" width="4.3" height="13.9" fill="#8cc0ee" stroke="#1f6fc5" stroke-width="1"/><rect x="11.5" y="10.4" width="4" height="5.8" fill="#8cc0ee" stroke="#1f6fc5" stroke-width="1"/></svg>
<svg class="a" style="left:458px;top:630px;" width="18" height="18" viewBox="0 0 18 18"><path d="M5.3 3.4 V7.4 M5.3 12.8 V14.2 M4 3.4 H6.6 M4 14.2 H6.6 M12.5 2.3 V4.3 M12.5 9.7 V14.5 M11.2 2.3 H13.8 M11.2 14.5 H13.8" stroke="#333" stroke-width="1" fill="none"/><circle cx="5.3" cy="1.3" r="0.7" fill="#333"/><circle cx="5.3" cy="16.3" r="0.7" fill="#333"/><circle cx="12.5" cy="16" r="0.7" fill="#333"/><rect x="3.2" y="7.4" width="4.3" height="5.4" fill="#8cc0ee" stroke="#1f6fc5" stroke-width="1"/><rect x="10.2" y="4.3" width="4.7" height="5.4" fill="#8cc0ee" stroke="#1f6fc5" stroke-width="1"/></svg>
<svg class="a" style="left:458px;top:654px;" width="18" height="18" viewBox="0 0 18 18"><path d="M1.4 1.4 V16.2 H16.6" fill="none" stroke="#333" stroke-width="1.1"/><rect x="6.5" y="5" width="3" height="6" fill="#c8c8c8"/><rect x="9.8" y="1.5" width="2.4" height="5" fill="#1f6fc5"/><path d="M3.5 16 V5 H9.5 V11 H9.8 V1.5 H12.2 V16 M12.2 1.5 H15 V16" fill="none" stroke="#333" stroke-width="1"/></svg>
<svg class="a" style="left:458px;top:678px;" width="18" height="18" viewBox="0 0 18 18"><rect x="1.5" y="2.5" width="15" height="4.3" fill="#8cc0ee" stroke="#1f6fc5" stroke-width="1"/><rect x="3.7" y="6.8" width="11" height="4" fill="#8cc0ee" stroke="#1f6fc5" stroke-width="1"/><rect x="6.4" y="10.8" width="5.2" height="4.1" fill="#8cc0ee" stroke="#1f6fc5" stroke-width="1"/></svg>
<svg class="a" style="left:458px;top:702px;" width="18" height="18" viewBox="0 0 18 18"><path d="M1.4 1 V16.4 H16.8" fill="none" stroke="#333" stroke-width="1.1"/><rect x="3.4" y="7.7" width="4.1" height="8.7" fill="#8cc0ee" stroke="#1f6fc5" stroke-width="1"/><rect x="7.5" y="2.7" width="4" height="13.7" fill="#fff" stroke="#333" stroke-width="1"/><rect x="11.5" y="5.7" width="4" height="10.7" fill="#c8c8c8" stroke="#777" stroke-width="1"/><path d="M1.5 15 L6 9.5 L10 14 L16.5 7" fill="none" stroke="#333" stroke-width="1"/></svg>
<div class="a" style="left:643px;top:267px;width:56px;height:56px;background:#cccccc;box-sizing:border-box;border:1px dotted #7a7a7a;"></div>
<svg class="a" style="left:645px;top:270px;" width="52" height="50" viewBox="0 0 52 50"><path d="M4.5 2 V46.5 H50" fill="none" stroke="#333" stroke-width="1"/><rect x="5.5" y="7.5" width="39" height="7" fill="#78b4ea" stroke="#1a6fc4"/><rect x="5.5" y="15.5" width="25" height="6" fill="#fff" stroke="#333"/><rect x="5.5" y="26.5" width="19" height="6" fill="#c8c8c8" stroke="#555"/><rect x="5.5" y="33.5" width="31" height="7" fill="#fff" stroke="#333"/></svg>
<svg class="a" style="left:701px;top:270px;" width="52" height="50" viewBox="0 0 52 50"><path d="M4.5 3 V47.5 H50" fill="none" stroke="#333" stroke-width="1"/><rect x="5.5" y="9.5" width="14" height="11" fill="#fff" stroke="#333"/><rect x="19.5" y="9.5" width="15" height="11" fill="#78b4ea" stroke="#1a6fc4"/><rect x="5.5" y="27.5" width="19" height="11" fill="#fff" stroke="#333"/><rect x="24.5" y="27.5" width="19" height="11" fill="#c8c8c8" stroke="#555"/></svg>
<svg class="a" style="left:757px;top:270px;" width="52" height="50" viewBox="0 0 52 50"><path d="M4.5 3 V47.5 H50" fill="none" stroke="#333" stroke-width="1"/><rect x="5.5" y="9.5" width="10" height="11" fill="#fff" stroke="#333"/><rect x="15.5" y="9.5" width="28" height="11" fill="#78b4ea" stroke="#1a6fc4"/><rect x="5.5" y="27.5" width="25" height="11" fill="#fff" stroke="#333"/><rect x="30.5" y="27.5" width="13" height="11" fill="#c8c8c8" stroke="#555"/></svg>
<svg class="a" style="left:800px;top:265px;" width="180" height="56" viewBox="0 0 180 56"><path d="M25.5 7.5 V47.5 H61 M25.5 47.5 L19.0 52.5" fill="none" stroke="#333" stroke-width="1"/><path d="M17.5 16.5 L20.5 13.5 H52.5 L49.5 16.5 Z" fill="#86bdec" stroke="#1a6fc4" stroke-width="1" stroke-linejoin="round"/><path d="M49.5 16.5 L52.5 13.5 V20.5 L49.5 23.5 Z" fill="#86bdec" stroke="#1a6fc4" stroke-width="1" stroke-linejoin="round"/><rect x="17.5" y="16.5" width="32.0" height="7.0" fill="#86bdec" stroke="#1a6fc4" stroke-width="1"/><path d="M17.5 12.5 L20.5 9.5 H43.5 L40.5 12.5 Z" fill="#fafafa" stroke="#333" stroke-width="1" stroke-linejoin="round"/><path d="M40.5 12.5 L43.5 9.5 V13.5 L40.5 16.5 Z" fill="#fafafa" stroke="#333" stroke-width="1" stroke-linejoin="round"/><rect x="17.5" y="12.5" width="23.0" height="4.0" fill="#fafafa" stroke="#333" stroke-width="1"/><path d="M17.5 35.5 L20.5 32.5 H44.5 L41.5 35.5 Z" fill="#86bdec" stroke="#1a6fc4" stroke-width="1" stroke-linejoin="round"/><path d="M41.5 35.5 L44.5 32.5 V40.5 L41.5 43.5 Z" fill="#86bdec" stroke="#1a6fc4" stroke-width="1" stroke-linejoin="round"/><rect x="17.5" y="35.5" width="24.0" height="8.0" fill="#86bdec" stroke="#1a6fc4" stroke-width="1"/><path d="M17.5 31.5 L20.5 28.5 H48.5 L45.5 31.5 Z" fill="#fafafa" stroke="#333" stroke-width="1" stroke-linejoin="round"/><path d="M45.5 31.5 L48.5 28.5 V32.5 L45.5 35.5 Z" fill="#fafafa" stroke="#333" stroke-width="1" stroke-linejoin="round"/><rect x="17.5" y="31.5" width="28.0" height="4.0" fill="#fafafa" stroke="#333" stroke-width="1"/><path d="M81.5 7.5 V45.5 H116.5 M81.5 45.5 L75.0 50.5" fill="none" stroke="#333" stroke-width="1"/><path d="M73.5 17.5 L76.5 14.5 H87.5 L84.5 17.5 Z" fill="#fafafa" stroke="#333" stroke-width="1" stroke-linejoin="round"/><path d="M84.5 17.5 L87.5 14.5 V22.5 L84.5 25.5 Z" fill="#fafafa" stroke="#333" stroke-width="1" stroke-linejoin="round"/><rect x="73.5" y="17.5" width="11.0" height="8.0" fill="#fafafa" stroke="#333" stroke-width="1"/><path d="M84.5 17.5 L87.5 14.5 H102.5 L99.5 17.5 Z" fill="#86bdec" stroke="#1a6fc4" stroke-width="1" stroke-linejoin="round"/><path d="M99.5 17.5 L102.5 14.5 V22.5 L99.5 25.5 Z" fill="#86bdec" stroke="#1a6fc4" stroke-width="1" stroke-linejoin="round"/><rect x="84.5" y="17.5" width="15.0" height="8.0" fill="#86bdec" stroke="#1a6fc4" stroke-width="1"/><path d="M73.5 33.5 L76.5 30.5 H95.5 L92.5 33.5 Z" fill="#fafafa" stroke="#333" stroke-width="1" stroke-linejoin="round"/><path d="M92.5 33.5 L95.5 30.5 V38.5 L92.5 41.5 Z" fill="#fafafa" stroke="#333" stroke-width="1" stroke-linejoin="round"/><rect x="73.5" y="33.5" width="19.0" height="8.0" fill="#fafafa" stroke="#333" stroke-width="1"/><path d="M92.5 33.5 L95.5 30.5 H111.5 L108.5 33.5 Z" fill="#86bdec" stroke="#1a6fc4" stroke-width="1" stroke-linejoin="round"/><path d="M108.5 33.5 L111.5 30.5 V38.5 L108.5 41.5 Z" fill="#86bdec" stroke="#1a6fc4" stroke-width="1" stroke-linejoin="round"/><rect x="92.5" y="33.5" width="16.0" height="8.0" fill="#86bdec" stroke="#1a6fc4" stroke-width="1"/><path d="M137.5 7.5 V45.5 H172.5 M137.5 45.5 L131.0 50.5" fill="none" stroke="#333" stroke-width="1"/><path d="M129.5 17.5 L132.5 14.5 H142.5 L139.5 17.5 Z" fill="#fafafa" stroke="#333" stroke-width="1" stroke-linejoin="round"/><path d="M139.5 17.5 L142.5 14.5 V22.5 L139.5 25.5 Z" fill="#fafafa" stroke="#333" stroke-width="1" stroke-linejoin="round"/><rect x="129.5" y="17.5" width="10.0" height="8.0" fill="#fafafa" stroke="#333" stroke-width="1"/><path d="M139.5 17.5 L142.5 14.5 H166.5 L163.5 17.5 Z" fill="#86bdec" stroke="#1a6fc4" stroke-width="1" stroke-linejoin="round"/><path d="M163.5 17.5 L166.5 14.5 V22.5 L163.5 25.5 Z" fill="#86bdec" stroke="#1a6fc4" stroke-width="1" stroke-linejoin="round"/><rect x="139.5" y="17.5" width="24.0" height="8.0" fill="#86bdec" stroke="#1a6fc4" stroke-width="1"/><path d="M129.5 33.5 L132.5 30.5 H150.5 L147.5 33.5 Z" fill="#fafafa" stroke="#333" stroke-width="1" stroke-linejoin="round"/><path d="M147.5 33.5 L150.5 30.5 V38.5 L147.5 41.5 Z" fill="#fafafa" stroke="#333" stroke-width="1" stroke-linejoin="round"/><rect x="129.5" y="33.5" width="18.0" height="8.0" fill="#fafafa" stroke="#333" stroke-width="1"/><path d="M147.5 33.5 L150.5 30.5 H166.5 L163.5 33.5 Z" fill="#86bdec" stroke="#1a6fc4" stroke-width="1" stroke-linejoin="round"/><path d="M163.5 33.5 L166.5 30.5 V38.5 L163.5 41.5 Z" fill="#86bdec" stroke="#1a6fc4" stroke-width="1" stroke-linejoin="round"/><rect x="147.5" y="33.5" width="16.0" height="8.0" fill="#86bdec" stroke="#1a6fc4" stroke-width="1"/></svg>
<div class="a" style="left:645px;top:328px;width:402px;height:1px;background:#c8c8c8;"></div>
<div class="t" style="left:643.25px;top:338px;color:#111111;font-family:'Liberation Sans';font-size:14.6px;transform:scaleX(1.0509);">Barras Agrupadas</div>
<div class="a" style="left:643px;top:360px;width:225px;height:138px;background:#c4c4c4;box-sizing:border-box;border:1px solid #8a8a8a;"></div>
<div class="a" style="left:647px;top:364px;width:217px;height:130px;background:#ffffff;"></div>
<svg class="a" style="left:647px;top:364px;" width="217" height="130" viewBox="0 0 217 130"><path d="M32.5 6.5 V116" stroke="#d9d9d9" stroke-width="0.8"/><path d="M55.5 6.5 V116" stroke="#d9d9d9" stroke-width="0.8"/><path d="M78.5 6.5 V116" stroke="#d9d9d9" stroke-width="0.8"/><path d="M101.5 6.5 V116" stroke="#d9d9d9" stroke-width="0.8"/><path d="M124.5 6.5 V116" stroke="#d9d9d9" stroke-width="0.8"/><path d="M147.5 6.5 V116" stroke="#d9d9d9" stroke-width="0.8"/><rect x="32.5" y="8.9" width="46.6" height="2.2" fill="#ed7d31"/><rect x="32.5" y="11.5" width="97.8" height="2.2" fill="#4472c4"/><text x="27.5" y="13.1" font-size="4.7" text-anchor="end" fill="#404040" font-family="Liberation Sans">Dezembro</text><rect x="32.5" y="18.1" width="27.0" height="2.2" fill="#ed7d31"/><rect x="32.5" y="20.7" width="82.6" height="2.2" fill="#4472c4"/><text x="27.5" y="22.3" font-size="4.7" text-anchor="end" fill="#404040" font-family="Liberation Sans">Novembro</text><rect x="32.5" y="27.3" width="51.8" height="2.2" fill="#ed7d31"/><rect x="32.5" y="29.9" width="50.1" height="2.2" fill="#4472c4"/><text x="27.5" y="31.5" font-size="4.7" text-anchor="end" fill="#404040" font-family="Liberation Sans">Outubro</text><rect x="32.5" y="36.5" width="37.7" height="2.2" fill="#ed7d31"/><rect x="32.5" y="39.1" width="51.8" height="2.2" fill="#4472c4"/><text x="27.5" y="40.7" font-size="4.7" text-anchor="end" fill="#404040" font-family="Liberation Sans">Setembro</text><rect x="32.5" y="45.7" width="30.5" height="2.2" fill="#ed7d31"/><rect x="32.5" y="48.3" width="46.0" height="2.2" fill="#4472c4"/><text x="27.5" y="49.9" font-size="4.7" text-anchor="end" fill="#404040" font-family="Liberation Sans">Agosto</text><rect x="32.5" y="55.0" width="39.1" height="2.2" fill="#ed7d31"/><rect x="32.5" y="57.6" width="17.9" height="2.2" fill="#4472c4"/><text x="27.5" y="59.2" font-size="4.7" text-anchor="end" fill="#404040" font-family="Liberation Sans">Julho</text><rect x="32.5" y="64.2" width="16.5" height="2.2" fill="#ed7d31"/><rect x="32.5" y="66.8" width="21.6" height="2.2" fill="#4472c4"/><text x="27.5" y="68.4" font-size="4.7" text-anchor="end" fill="#404040" font-family="Liberation Sans">Junho</text><rect x="32.5" y="73.4" width="9.2" height="2.2" fill="#ed7d31"/><rect x="32.5" y="76.0" width="14.1" height="2.2" fill="#4472c4"/><text x="27.5" y="77.6" font-size="4.7" text-anchor="end" fill="#404040" font-family="Liberation Sans">Maio</text><rect x="32.5" y="82.6" width="16.7" height="2.2" fill="#ed7d31"/><rect x="32.5" y="85.2" width="28.2" height="2.2" fill="#4472c4"/><text x="27.5" y="86.8" font-size="4.7" text-anchor="end" fill="#404040" font-family="Liberation Sans">Abril</text><rect x="32.5" y="91.8" width="8.6" height="2.2" fill="#ed7d31"/><rect x="32.5" y="94.4" width="13.0" height="2.2" fill="#4472c4"/><text x="27.5" y="96.0" font-size="4.7" text-anchor="end" fill="#404040" font-family="Liberation Sans">Março</text><rect x="32.5" y="101.0" width="8.6" height="2.2" fill="#ed7d31"/><rect x="32.5" y="103.6" width="26.7" height="2.2" fill="#4472c4"/><text x="27.5" y="105.2" font-size="4.7" text-anchor="end" fill="#404040" font-family="Liberation Sans">Fevereiro</text><rect x="32.5" y="110.2" width="11.8" height="2.2" fill="#ed7d31"/><rect x="32.5" y="112.8" width="17.2" height="2.2" fill="#4472c4"/><text x="27.5" y="114.4" font-size="4.7" text-anchor="end" fill="#404040" font-family="Liberation Sans">Janeiro</text><text x="32.5" y="123.5" font-size="4.7" text-anchor="middle" fill="#404040" font-family="Liberation Sans">0</text><text x="55.5" y="123.5" font-size="4.7" text-anchor="middle" fill="#404040" font-family="Liberation Sans">20000</text><text x="78.5" y="123.5" font-size="4.7" text-anchor="middle" fill="#404040" font-family="Liberation Sans">40000</text><text x="101.5" y="123.5" font-size="4.7" text-anchor="middle" fill="#404040" font-family="Liberation Sans">60000</text><text x="124.5" y="123.5" font-size="4.7" text-anchor="middle" fill="#404040" font-family="Liberation Sans">80000</text><text x="147.5" y="123.5" font-size="4.7" text-anchor="middle" fill="#404040" font-family="Liberation Sans">100000</text><rect x="166" y="57.5" width="3" height="3" fill="#ed7d31"/><text x="170" y="60.5" font-size="4.7" fill="#404040" font-family="Liberation Sans">Soma de Despesas</text><rect x="166" y="67.5" width="3" height="3" fill="#4472c4"/><text x="170" y="70.5" font-size="4.7" fill="#404040" font-family="Liberation Sans">Soma de Receitas</text></svg>
<div class="a" style="left:904px;top:765px;width:73px;height:21px;background:#e1e1e1;box-sizing:border-box;border:2px solid #0078d7;"></div>
<div class="t" style="left:933.25px;top:770px;color:#111111;font-family:'Liberation Sans';font-size:12.3px;transform:scaleX(0.8500);">OK</div>
<div class="a" style="left:988px;top:765px;width:73px;height:21px;background:#e1e1e1;box-sizing:border-box;border:1px solid #adadad;"></div>
<div class="t" style="left:1002.60px;top:770px;color:#111111;font-family:'Liberation Sans';font-size:12.3px;transform:scaleX(0.8939);">Cancelar</div>
<svg class="a" style="left:1056px;top:784px;" width="10" height="10" viewBox="0 0 10 10"><g fill="#b8b8b8"><rect x="7" y="1" width="2" height="2"/><rect x="4" y="4" width="2" height="2"/><rect x="7" y="4" width="2" height="2"/><rect x="1" y="7" width="2" height="2"/><rect x="4" y="7" width="2" height="2"/><rect x="7" y="7" width="2" height="2"/></g></svg>
<div class="a" style="left:0px;top:0px;width:1499px;height:1px;background:#6d6d6d;"></div>
<div class="a" style="left:0px;top:930px;width:1499px;height:1px;background:#6d6d6d;"></div>
<div class="a" style="left:0px;top:0px;width:1px;height:931px;background:#6d6d6d;"></div>
<div class="a" style="left:1498px;top:0px;width:1px;height:931px;background:#6d6d6d;"></div>
</body></html>
